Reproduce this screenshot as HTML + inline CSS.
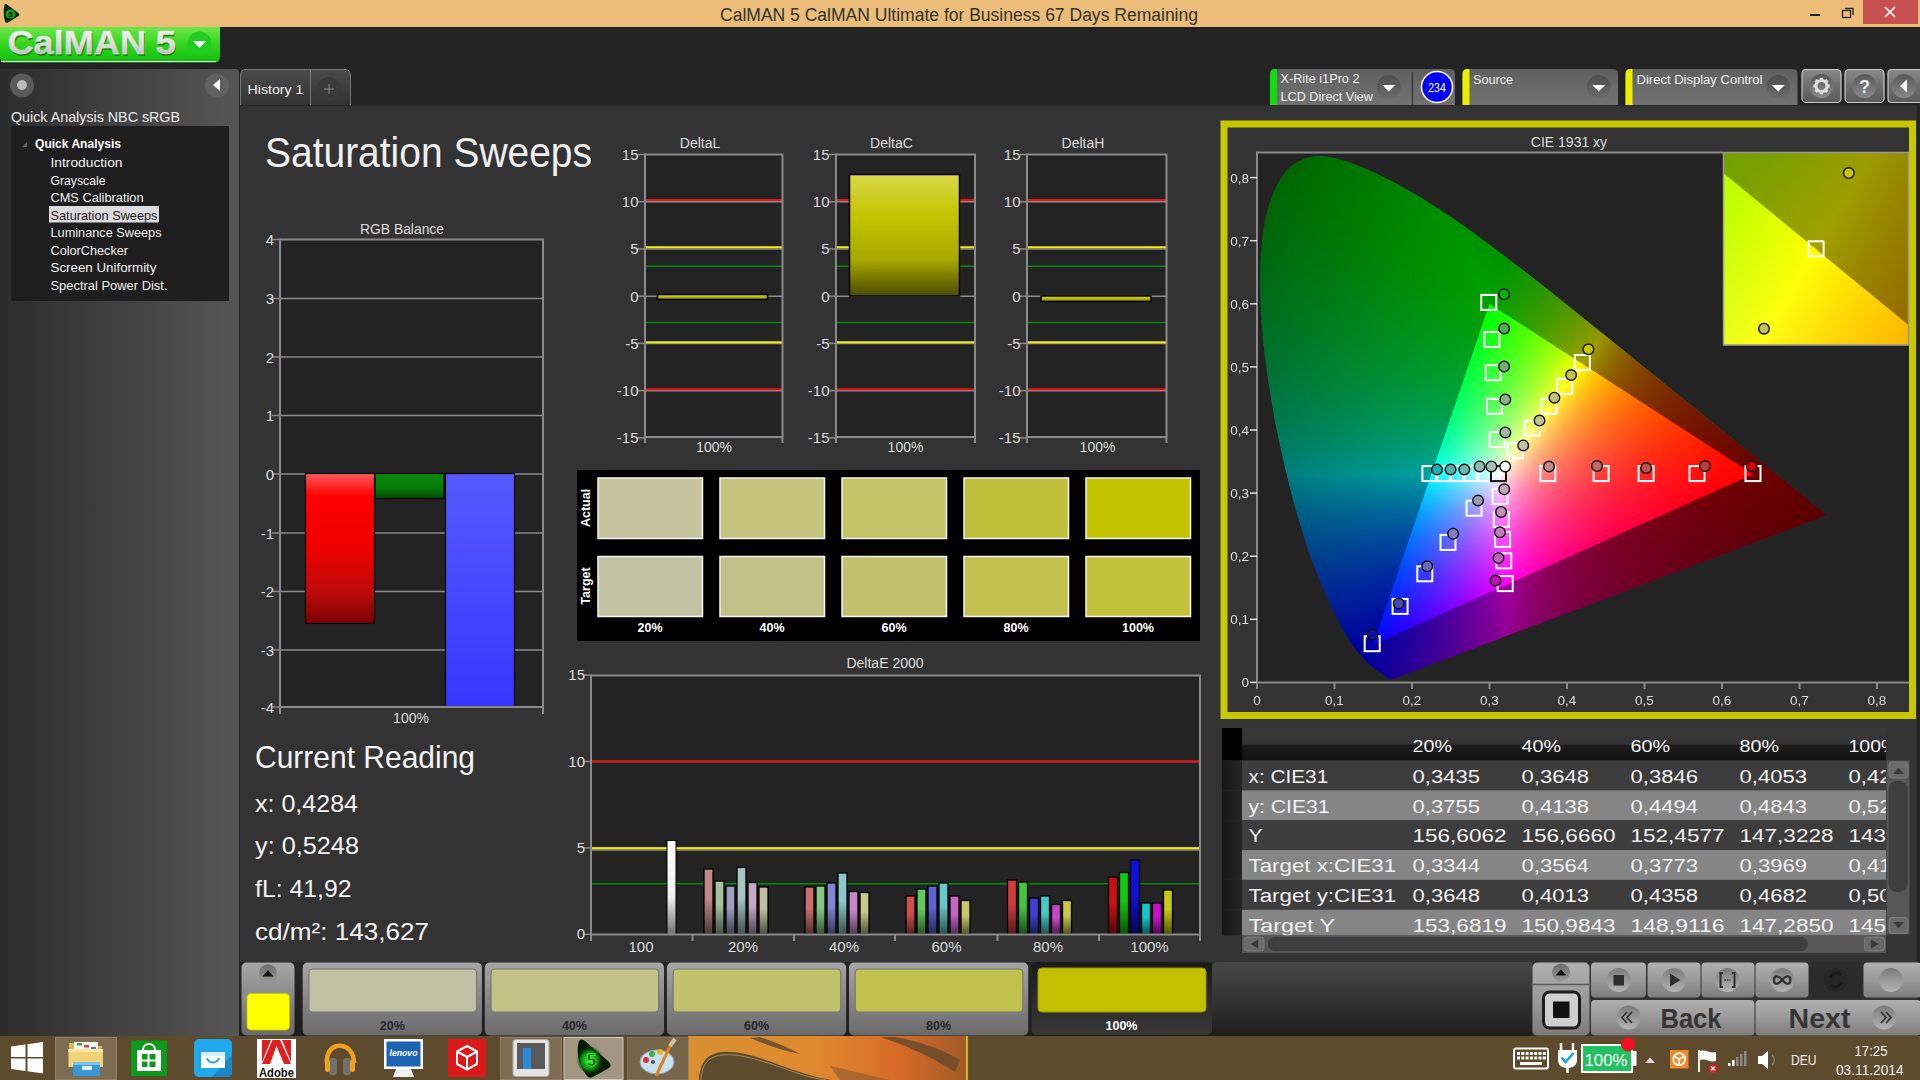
<!DOCTYPE html>
<html><head><meta charset="utf-8"><title>CalMAN 5</title>
<style>html,body{margin:0;padding:0;width:1920px;height:1080px;overflow:hidden;background:#232323}</style>
</head><body><svg width="1920" height="1080" viewBox="0 0 1920 1080" style="position:absolute;left:0;top:0" font-family='"Liberation Sans", sans-serif'><defs><linearGradient id="g1" x1="0" y1="0" x2="0" y2="1"><stop offset="0" stop-color="#6EE84A"/><stop offset="0.5" stop-color="#33D41C"/><stop offset="1" stop-color="#10C010"/></linearGradient><linearGradient id="g2" x1="0" y1="0" x2="0" y2="1"><stop offset="0" stop-color="#ffffff"/><stop offset="0.6" stop-color="#d8d8d8"/><stop offset="1" stop-color="#a8a8a8"/></linearGradient><linearGradient id="g3" x1="0" y1="0" x2="1" y2="0"><stop offset="0" stop-color="#2c2c2c"/><stop offset="1" stop-color="#565656"/></linearGradient><linearGradient id="g4" x1="0" y1="0" x2="0" y2="1"><stop offset="0" stop-color="#4a4a4a"/><stop offset="1" stop-color="#333"/></linearGradient><linearGradient id="g5" x1="0" y1="0" x2="0" y2="1"><stop offset="0" stop-color="#ff5a5a"/><stop offset="0.15" stop-color="#ff0000"/><stop offset="0.5" stop-color="#ee0000"/><stop offset="0.8" stop-color="#bb0a0a"/><stop offset="1" stop-color="#7a0000"/></linearGradient><linearGradient id="g6" x1="0" y1="0" x2="0" y2="1"><stop offset="0" stop-color="#0a8a0a"/><stop offset="0.6" stop-color="#067a06"/><stop offset="1" stop-color="#044a04"/></linearGradient><linearGradient id="g7" x1="0" y1="0" x2="0" y2="1"><stop offset="0" stop-color="#5858ff"/><stop offset="1" stop-color="#3636ff"/></linearGradient><linearGradient id="g8" x1="0" y1="0" x2="0" y2="1"><stop offset="0" stop-color="#d8d848"/><stop offset="0.35" stop-color="#c4c400"/><stop offset="0.7" stop-color="#a8a800"/><stop offset="1" stop-color="#4a4a00"/></linearGradient><linearGradient id="g9" x1="0" y1="0" x2="0" y2="1"><stop offset="0" stop-color="#d8d848"/><stop offset="0.35" stop-color="#c4c400"/><stop offset="0.7" stop-color="#a8a800"/><stop offset="1" stop-color="#4a4a00"/></linearGradient><linearGradient id="g10" x1="0" y1="0" x2="0" y2="1"><stop offset="0" stop-color="#d8d848"/><stop offset="0.35" stop-color="#c4c400"/><stop offset="0.7" stop-color="#a8a800"/><stop offset="1" stop-color="#4a4a00"/></linearGradient><linearGradient id="g11" x1="0" y1="0" x2="0" y2="1"><stop offset="0" stop-color="#ffffff"/><stop offset="0.6" stop-color="#f0f0f0"/><stop offset="1" stop-color="#707070"/></linearGradient><linearGradient id="g12" x1="0" y1="0" x2="0" y2="1"><stop offset="0" stop-color="#c08888"/><stop offset="0.45" stop-color="#c08888"/><stop offset="1" stop-color="#4c3636"/></linearGradient><linearGradient id="g13" x1="0" y1="0" x2="0" y2="1"><stop offset="0" stop-color="#a6c0a0"/><stop offset="0.45" stop-color="#a6c0a0"/><stop offset="1" stop-color="#424c40"/></linearGradient><linearGradient id="g14" x1="0" y1="0" x2="0" y2="1"><stop offset="0" stop-color="#9c9cc0"/><stop offset="0.45" stop-color="#9c9cc0"/><stop offset="1" stop-color="#3e3e4c"/></linearGradient><linearGradient id="g15" x1="0" y1="0" x2="0" y2="1"><stop offset="0" stop-color="#a8c4c4"/><stop offset="0.45" stop-color="#a8c4c4"/><stop offset="1" stop-color="#434e4e"/></linearGradient><linearGradient id="g16" x1="0" y1="0" x2="0" y2="1"><stop offset="0" stop-color="#c4a8c4"/><stop offset="0.45" stop-color="#c4a8c4"/><stop offset="1" stop-color="#4e434e"/></linearGradient><linearGradient id="g17" x1="0" y1="0" x2="0" y2="1"><stop offset="0" stop-color="#c0c0a0"/><stop offset="0.45" stop-color="#c0c0a0"/><stop offset="1" stop-color="#4c4c40"/></linearGradient><linearGradient id="g18" x1="0" y1="0" x2="0" y2="1"><stop offset="0" stop-color="#c87070"/><stop offset="0.45" stop-color="#c87070"/><stop offset="1" stop-color="#502c2c"/></linearGradient><linearGradient id="g19" x1="0" y1="0" x2="0" y2="1"><stop offset="0" stop-color="#84c884"/><stop offset="0.45" stop-color="#84c884"/><stop offset="1" stop-color="#345034"/></linearGradient><linearGradient id="g20" x1="0" y1="0" x2="0" y2="1"><stop offset="0" stop-color="#8484d4"/><stop offset="0.45" stop-color="#8484d4"/><stop offset="1" stop-color="#343454"/></linearGradient><linearGradient id="g21" x1="0" y1="0" x2="0" y2="1"><stop offset="0" stop-color="#8cc8c8"/><stop offset="0.45" stop-color="#8cc8c8"/><stop offset="1" stop-color="#385050"/></linearGradient><linearGradient id="g22" x1="0" y1="0" x2="0" y2="1"><stop offset="0" stop-color="#c884c8"/><stop offset="0.45" stop-color="#c884c8"/><stop offset="1" stop-color="#503450"/></linearGradient><linearGradient id="g23" x1="0" y1="0" x2="0" y2="1"><stop offset="0" stop-color="#c8c888"/><stop offset="0.45" stop-color="#c8c888"/><stop offset="1" stop-color="#505036"/></linearGradient><linearGradient id="g24" x1="0" y1="0" x2="0" y2="1"><stop offset="0" stop-color="#cc5050"/><stop offset="0.45" stop-color="#cc5050"/><stop offset="1" stop-color="#512020"/></linearGradient><linearGradient id="g25" x1="0" y1="0" x2="0" y2="1"><stop offset="0" stop-color="#60c860"/><stop offset="0.45" stop-color="#60c860"/><stop offset="1" stop-color="#265026"/></linearGradient><linearGradient id="g26" x1="0" y1="0" x2="0" y2="1"><stop offset="0" stop-color="#6060d0"/><stop offset="0.45" stop-color="#6060d0"/><stop offset="1" stop-color="#262653"/></linearGradient><linearGradient id="g27" x1="0" y1="0" x2="0" y2="1"><stop offset="0" stop-color="#66c8c8"/><stop offset="0.45" stop-color="#66c8c8"/><stop offset="1" stop-color="#285050"/></linearGradient><linearGradient id="g28" x1="0" y1="0" x2="0" y2="1"><stop offset="0" stop-color="#c866c8"/><stop offset="0.45" stop-color="#c866c8"/><stop offset="1" stop-color="#502850"/></linearGradient><linearGradient id="g29" x1="0" y1="0" x2="0" y2="1"><stop offset="0" stop-color="#c8c866"/><stop offset="0.45" stop-color="#c8c866"/><stop offset="1" stop-color="#505028"/></linearGradient><linearGradient id="g30" x1="0" y1="0" x2="0" y2="1"><stop offset="0" stop-color="#d03c3c"/><stop offset="0.45" stop-color="#d03c3c"/><stop offset="1" stop-color="#531818"/></linearGradient><linearGradient id="g31" x1="0" y1="0" x2="0" y2="1"><stop offset="0" stop-color="#40c840"/><stop offset="0.45" stop-color="#40c840"/><stop offset="1" stop-color="#195019"/></linearGradient><linearGradient id="g32" x1="0" y1="0" x2="0" y2="1"><stop offset="0" stop-color="#4040d8"/><stop offset="0.45" stop-color="#4040d8"/><stop offset="1" stop-color="#191956"/></linearGradient><linearGradient id="g33" x1="0" y1="0" x2="0" y2="1"><stop offset="0" stop-color="#44c8c8"/><stop offset="0.45" stop-color="#44c8c8"/><stop offset="1" stop-color="#1b5050"/></linearGradient><linearGradient id="g34" x1="0" y1="0" x2="0" y2="1"><stop offset="0" stop-color="#c844c8"/><stop offset="0.45" stop-color="#c844c8"/><stop offset="1" stop-color="#501b50"/></linearGradient><linearGradient id="g35" x1="0" y1="0" x2="0" y2="1"><stop offset="0" stop-color="#c8c844"/><stop offset="0.45" stop-color="#c8c844"/><stop offset="1" stop-color="#50501b"/></linearGradient><linearGradient id="g36" x1="0" y1="0" x2="0" y2="1"><stop offset="0" stop-color="#cc1010"/><stop offset="0.45" stop-color="#cc1010"/><stop offset="1" stop-color="#510606"/></linearGradient><linearGradient id="g37" x1="0" y1="0" x2="0" y2="1"><stop offset="0" stop-color="#10cc10"/><stop offset="0.45" stop-color="#10cc10"/><stop offset="1" stop-color="#065106"/></linearGradient><linearGradient id="g38" x1="0" y1="0" x2="0" y2="1"><stop offset="0" stop-color="#1010dd"/><stop offset="0.45" stop-color="#1010dd"/><stop offset="1" stop-color="#060658"/></linearGradient><linearGradient id="g39" x1="0" y1="0" x2="0" y2="1"><stop offset="0" stop-color="#10c8c8"/><stop offset="0.45" stop-color="#10c8c8"/><stop offset="1" stop-color="#065050"/></linearGradient><linearGradient id="g40" x1="0" y1="0" x2="0" y2="1"><stop offset="0" stop-color="#c810c8"/><stop offset="0.45" stop-color="#c810c8"/><stop offset="1" stop-color="#500650"/></linearGradient><linearGradient id="g41" x1="0" y1="0" x2="0" y2="1"><stop offset="0" stop-color="#c8c810"/><stop offset="0.45" stop-color="#c8c810"/><stop offset="1" stop-color="#505006"/></linearGradient><linearGradient id="g42" x1="0" y1="0" x2="0" y2="1"><stop offset="0" stop-color="#5e5e5e"/><stop offset="0.5" stop-color="#6a6a6a"/><stop offset="1" stop-color="#727272"/></linearGradient><linearGradient id="g43" x1="0" y1="0" x2="0" y2="1"><stop offset="0" stop-color="#4e4e4e"/><stop offset="1" stop-color="#6c6c6c"/></linearGradient><linearGradient id="g44" x1="0" y1="0" x2="0" y2="1"><stop offset="0" stop-color="#5e5e5e"/><stop offset="0.5" stop-color="#6a6a6a"/><stop offset="1" stop-color="#727272"/></linearGradient><linearGradient id="g45" x1="0" y1="0" x2="0" y2="1"><stop offset="0" stop-color="#4e4e4e"/><stop offset="1" stop-color="#6c6c6c"/></linearGradient><linearGradient id="g46" x1="0" y1="0" x2="0" y2="1"><stop offset="0" stop-color="#5e5e5e"/><stop offset="0.5" stop-color="#6a6a6a"/><stop offset="1" stop-color="#727272"/></linearGradient><linearGradient id="g47" x1="0" y1="0" x2="0" y2="1"><stop offset="0" stop-color="#4e4e4e"/><stop offset="1" stop-color="#6c6c6c"/></linearGradient><linearGradient id="g48" x1="0" y1="0" x2="0" y2="1"><stop offset="0" stop-color="#8a8a8a"/><stop offset="0.5" stop-color="#6e6e6e"/><stop offset="1" stop-color="#5a5a5a"/></linearGradient><linearGradient id="g49" x1="0" y1="0" x2="0" y2="1"><stop offset="0" stop-color="#585858"/><stop offset="1" stop-color="#8a8a8a"/></linearGradient><linearGradient id="g50" x1="0" y1="0" x2="0" y2="1"><stop offset="0" stop-color="#8a8a8a"/><stop offset="0.5" stop-color="#6e6e6e"/><stop offset="1" stop-color="#5a5a5a"/></linearGradient><linearGradient id="g51" x1="0" y1="0" x2="0" y2="1"><stop offset="0" stop-color="#585858"/><stop offset="1" stop-color="#8a8a8a"/></linearGradient><linearGradient id="g52" x1="0" y1="0" x2="0" y2="1"><stop offset="0" stop-color="#8a8a8a"/><stop offset="0.5" stop-color="#6e6e6e"/><stop offset="1" stop-color="#5a5a5a"/></linearGradient><linearGradient id="g53" x1="0" y1="0" x2="0" y2="1"><stop offset="0" stop-color="#585858"/><stop offset="1" stop-color="#8a8a8a"/></linearGradient><linearGradient id="g54" x1="0" y1="0" x2="0" y2="1"><stop offset="0" stop-color="#383838"/><stop offset="0.5" stop-color="#333"/><stop offset="0.52" stop-color="#1c1c1c"/><stop offset="1" stop-color="#111"/></linearGradient><linearGradient id="g55" x1="0" y1="0" x2="1" y2="0"><stop offset="0" stop-color="#161616"/><stop offset="1" stop-color="#262626"/></linearGradient><linearGradient id="g56" x1="0" y1="0" x2="0" y2="1"><stop offset="0" stop-color="#262626"/><stop offset="1" stop-color="#1e1e1e"/></linearGradient><linearGradient id="g57" x1="0" y1="0" x2="0" y2="1"><stop offset="0" stop-color="#474747"/><stop offset="0.5" stop-color="#333"/><stop offset="1" stop-color="#1e1e1e"/></linearGradient><linearGradient id="g58" x1="0" y1="0" x2="0" y2="1"><stop offset="0" stop-color="#a6a6a6"/><stop offset="0.45" stop-color="#8a8a8a"/><stop offset="1" stop-color="#6a6a6a"/></linearGradient><linearGradient id="g59" x1="0" y1="0" x2="0" y2="1"><stop offset="0" stop-color="#6a6a6a"/><stop offset="1" stop-color="#9a9a9a"/></linearGradient><linearGradient id="g60" x1="0" y1="0" x2="0" y2="1"><stop offset="0" stop-color="#191919"/><stop offset="0.6" stop-color="#2e2e2e"/><stop offset="1" stop-color="#363636"/></linearGradient><linearGradient id="g61" x1="0" y1="0" x2="0" y2="1"><stop offset="0" stop-color="#b0b0b0"/><stop offset="0.5" stop-color="#9a9a9a"/><stop offset="1" stop-color="#7c7c7c"/></linearGradient><linearGradient id="g62" x1="0" y1="0" x2="0" y2="1"><stop offset="0" stop-color="#7a7a7a"/><stop offset="1" stop-color="#b4b4b4"/></linearGradient><linearGradient id="g63" x1="0" y1="0" x2="1" y2="0"><stop offset="0" stop-color="#d89030"/><stop offset="0.45" stop-color="#e08a30"/><stop offset="0.75" stop-color="#d86a28"/><stop offset="1" stop-color="#a05a28"/></linearGradient><radialGradient id="cg5" cx="0.45" cy="0.55" r="0.5"><stop offset="0" stop-color="#3aff3a"/><stop offset="0.6" stop-color="#0a8a0a"/><stop offset="1" stop-color="#031a03" stop-opacity="0"/></radialGradient><linearGradient id="g64" x1="0" y1="0" x2="0" y2="1"><stop offset="0" stop-color="#006400"/><stop offset="0.45" stop-color="#008a30"/><stop offset="0.6" stop-color="#008a80"/><stop offset="0.75" stop-color="#003a9a"/><stop offset="1" stop-color="#0000a0"/></linearGradient><linearGradient id="g65" x1="0" y1="0" x2="0" y2="1"><stop offset="0" stop-color="#5a0000"/><stop offset="1" stop-color="#5a0000"/></linearGradient><linearGradient id="g66" x1="0" y1="0" x2="1" y2="0.6"><stop offset="0" stop-color="#1a9a10"/><stop offset="0.45" stop-color="#8a9000"/><stop offset="0.75" stop-color="#7a3000"/><stop offset="1" stop-color="#5a0000"/></linearGradient><linearGradient id="g67" x1="0" y1="0" x2="1" y2="0"><stop offset="0" stop-color="#3000a0"/><stop offset="0.4" stop-color="#900080"/><stop offset="0.7" stop-color="#7a0030"/><stop offset="1" stop-color="#5a0000"/></linearGradient><linearGradient id="fbR" gradientUnits="userSpaceOnUse" x1="1753.0" y1="474.2" x2="1464.9" y2="375.9"><stop offset="0" stop-color="#ff0000"/><stop offset="0.62" stop-color="#ff0000"/><stop offset="1" stop-color="#000"/></linearGradient><linearGradient id="fbG" gradientUnits="userSpaceOnUse" x1="1489.5" y1="303.8" x2="1597.3" y2="544.0"><stop offset="0" stop-color="#00ff00"/><stop offset="0.62" stop-color="#00ff00"/><stop offset="1" stop-color="#000"/></linearGradient><linearGradient id="fbB" gradientUnits="userSpaceOnUse" x1="1373.2" y1="644.5" x2="1562.9" y2="351.2"><stop offset="0" stop-color="#0000ff"/><stop offset="0.62" stop-color="#0000ff"/><stop offset="1" stop-color="#000"/></linearGradient><linearGradient id="g68" x1="0" y1="0" x2="1" y2="1"><stop offset="0" stop-color="#d0ff00"/><stop offset="0.5" stop-color="#ffff00"/><stop offset="1" stop-color="#ffb000"/></linearGradient></defs><rect x="0" y="0" width="1920" height="1080" fill="#232323" /><rect x="0" y="0" width="1920" height="27" fill="#EBBD78" /><text x="959" y="21" font-size="18" fill="#333" text-anchor="middle" font-weight="normal" textLength="478" lengthAdjust="spacingAndGlyphs" >CalMAN 5 CalMAN Ultimate for Business 67 Days Remaining</text><rect x="1863" y="0" width="55" height="24" fill="#C75050" /><path d="M1885 7 L1895 17 M1895 7 L1885 17" stroke="#fff" stroke-width="1.6"/><rect x="1810" y="14" width="10" height="2" fill="#222" /><rect x="1842.5" y="10.5" width="8" height="7" fill="none" stroke="#222" stroke-width="1.3"/><path d="M1845 8.5 H1853 V15" fill="none" stroke="#222" stroke-width="1.3"/><path d="M4.5 5 Q5 3 7 4.5 L19 13.5 Q20 15 18.5 16 L8 22.5 Q6 23.5 5 21.5 Q2.5 13 4.5 5Z" fill="#062a06"/><ellipse cx="10.5" cy="14" rx="5" ry="4.5" fill="#1fb01f" opacity="0.85"/><text x="10.5" y="17" font-size="8" font-weight="bold" fill="#000" text-anchor="middle">5</text><path d="M0 27 H220 V57 Q220 62.5 214.5 62.5 H5.5 Q0 62.5 0 57 Z" fill="url(#g1)"/><path d="M1 61.5 H216" stroke="#e8ffe8" stroke-width="1"/><text x="8.5" y="55.5" font-size="33" fill="#1a6a10" text-anchor="start" font-weight="bold" textLength="138.5" lengthAdjust="spacingAndGlyphs" opacity="0.7">CalMAN</text><text x="156.5" y="55.5" font-size="33" fill="#1a6a10" text-anchor="start" font-weight="bold" textLength="20.5" lengthAdjust="spacingAndGlyphs" opacity="0.7">5</text><text x="7.5" y="54" font-size="33" fill="url(#g2)" text-anchor="start" font-weight="bold" textLength="138.5" lengthAdjust="spacingAndGlyphs" stroke="#e8e8e8" stroke-width="0.3">CalMAN</text><text x="155.5" y="54" font-size="33" fill="url(#g2)" text-anchor="start" font-weight="bold" textLength="20.5" lengthAdjust="spacingAndGlyphs" stroke="#e8e8e8" stroke-width="0.3">5</text><circle cx="199.5" cy="43.5" r="12" fill="#22cc22"/><path d="M193 41 H206 L199.5 48 Z" fill="#fff"/><path d="M0 69 H235 Q239 69 239 73 V1036 H0 Z" fill="url(#g3)"/><circle cx="22" cy="85.5" r="12" fill="#5a5a5a"/><circle cx="22" cy="85" r="5" fill="#bbb"/><circle cx="217" cy="85.5" r="12" fill="#606060"/><path d="M213 85 L220 79 V91 Z" fill="#fff"/><text x="11" y="121.5" font-size="15.5" fill="#eee" text-anchor="start" font-weight="normal" textLength="169" lengthAdjust="spacingAndGlyphs" >Quick Analysis NBC sRGB</text><rect x="11" y="126" width="218" height="175" fill="#1e1e1e" /><path d="M22 147 L27 142 V147 Z" fill="#666"/><text x="35" y="148" font-size="12.5" fill="#fff" text-anchor="start" font-weight="bold" textLength="86" lengthAdjust="spacingAndGlyphs" >Quick Analysis</text><rect x="49" y="206" width="110" height="16.5" fill="#dcdcdc" /><text x="50.5" y="167" font-size="12.5" fill="#f2f2f2" text-anchor="start" font-weight="normal" textLength="72" lengthAdjust="spacingAndGlyphs" >Introduction</text><text x="50.5" y="184.5" font-size="12.5" fill="#f2f2f2" text-anchor="start" font-weight="normal" textLength="55" lengthAdjust="spacingAndGlyphs" >Grayscale</text><text x="50.5" y="202" font-size="12.5" fill="#f2f2f2" text-anchor="start" font-weight="normal" textLength="93" lengthAdjust="spacingAndGlyphs" >CMS Calibration</text><text x="50.5" y="219.5" font-size="12.5" fill="#222" text-anchor="start" font-weight="normal" textLength="107" lengthAdjust="spacingAndGlyphs" >Saturation Sweeps</text><text x="50.5" y="237" font-size="12.5" fill="#f2f2f2" text-anchor="start" font-weight="normal" textLength="111" lengthAdjust="spacingAndGlyphs" >Luminance Sweeps</text><text x="50.5" y="254.5" font-size="12.5" fill="#f2f2f2" text-anchor="start" font-weight="normal" textLength="77.5" lengthAdjust="spacingAndGlyphs" >ColorChecker</text><text x="50.5" y="272" font-size="12.5" fill="#f2f2f2" text-anchor="start" font-weight="normal" textLength="106" lengthAdjust="spacingAndGlyphs" >Screen Uniformity</text><text x="50.5" y="289.5" font-size="12.5" fill="#f2f2f2" text-anchor="start" font-weight="normal" textLength="117" lengthAdjust="spacingAndGlyphs" >Spectral Power Dist.</text><path d="M240.5 105 V75 Q240.5 69.5 246 69.5 H345 Q350.5 69.5 350.5 75 V105" fill="url(#g4)" stroke="#777" stroke-width="1"/><line x1="310.5" y1="70" x2="310.5" y2="105" stroke="#777" stroke-width="1" /><text x="247.5" y="94" font-size="13" fill="#eee" text-anchor="start" font-weight="normal" textLength="56" lengthAdjust="spacingAndGlyphs" >History 1</text><circle cx="329" cy="89" r="12" fill="#3a3a3a"/><path d="M329 84 V94 M324 89 H334" stroke="#888" stroke-width="1"/><rect x="240" y="105.5" width="1677" height="931" fill="#333333" /><text x="265" y="167" font-size="42" fill="#f0f0f0" text-anchor="start" font-weight="normal" textLength="327" lengthAdjust="spacingAndGlyphs" >Saturation Sweeps</text><text x="402" y="233.5" font-size="14" fill="#ddd" text-anchor="middle" font-weight="normal" textLength="84" lengthAdjust="spacingAndGlyphs" >RGB Balance</text><rect x="280" y="239.5" width="263" height="467" fill="#232323" /><line x1="272" y1="239.5" x2="280" y2="239.5" stroke="#8a8a8a" stroke-width="1.5" /><text x="274" y="245.0" font-size="15" fill="#ddd" text-anchor="end" font-weight="normal" >4</text><line x1="272" y1="298.5" x2="280" y2="298.5" stroke="#8a8a8a" stroke-width="1.5" /><line x1="280" y1="298.5" x2="543" y2="298.5" stroke="#8a8a8a" stroke-width="1.5" /><text x="274" y="304.0" font-size="15" fill="#ddd" text-anchor="end" font-weight="normal" >3</text><line x1="272" y1="357" x2="280" y2="357" stroke="#8a8a8a" stroke-width="1.5" /><line x1="280" y1="357" x2="543" y2="357" stroke="#8a8a8a" stroke-width="1.5" /><text x="274" y="362.5" font-size="15" fill="#ddd" text-anchor="end" font-weight="normal" >2</text><line x1="272" y1="415.5" x2="280" y2="415.5" stroke="#8a8a8a" stroke-width="1.5" /><line x1="280" y1="415.5" x2="543" y2="415.5" stroke="#8a8a8a" stroke-width="1.5" /><text x="274" y="421.0" font-size="15" fill="#ddd" text-anchor="end" font-weight="normal" >1</text><line x1="272" y1="474" x2="280" y2="474" stroke="#8a8a8a" stroke-width="1.5" /><line x1="280" y1="474" x2="543" y2="474" stroke="#8a8a8a" stroke-width="1.5" /><text x="274" y="479.5" font-size="15" fill="#ddd" text-anchor="end" font-weight="normal" >0</text><line x1="272" y1="533" x2="280" y2="533" stroke="#8a8a8a" stroke-width="1.5" /><line x1="280" y1="533" x2="543" y2="533" stroke="#8a8a8a" stroke-width="1.5" /><text x="274" y="538.5" font-size="15" fill="#ddd" text-anchor="end" font-weight="normal" >-1</text><line x1="272" y1="591.5" x2="280" y2="591.5" stroke="#8a8a8a" stroke-width="1.5" /><line x1="280" y1="591.5" x2="543" y2="591.5" stroke="#8a8a8a" stroke-width="1.5" /><text x="274" y="597.0" font-size="15" fill="#ddd" text-anchor="end" font-weight="normal" >-2</text><line x1="272" y1="650" x2="280" y2="650" stroke="#8a8a8a" stroke-width="1.5" /><line x1="280" y1="650" x2="543" y2="650" stroke="#8a8a8a" stroke-width="1.5" /><text x="274" y="655.5" font-size="15" fill="#ddd" text-anchor="end" font-weight="normal" >-3</text><line x1="272" y1="707" x2="280" y2="707" stroke="#8a8a8a" stroke-width="1.5" /><text x="274" y="712.5" font-size="15" fill="#ddd" text-anchor="end" font-weight="normal" >-4</text><rect x="305.5" y="473.5" width="69" height="150" fill="url(#g5)" stroke="#000" stroke-width="1.2"/><rect x="375" y="473.5" width="69" height="25" fill="url(#g6)" stroke="#000" stroke-width="1.2"/><rect x="445.5" y="473.5" width="69" height="233" fill="url(#g7)" stroke="#000" stroke-width="1.2"/><path d="M280 239.5 H543 V707" fill="none" stroke="#8a8a8a" stroke-width="2"/><line x1="280" y1="238.5" x2="280" y2="714" stroke="#8a8a8a" stroke-width="2" /><line x1="279" y1="707" x2="543" y2="707" stroke="#8a8a8a" stroke-width="2" /><line x1="543" y1="707" x2="543" y2="714" stroke="#8a8a8a" stroke-width="2" /><text x="411" y="723" font-size="14" fill="#ddd" text-anchor="middle" font-weight="normal" >100%</text><text x="700" y="148" font-size="14" fill="#ddd" text-anchor="middle" font-weight="normal" >DeltaL</text><rect x="645" y="154.5" width="137.5" height="282" fill="#232323" /><line x1="638" y1="154.495" x2="645" y2="154.495" stroke="#8a8a8a" stroke-width="1.5" /><text x="638.5" y="159.995" font-size="15" fill="#ddd" text-anchor="end" font-weight="normal" >15</text><line x1="638" y1="201.73" x2="645" y2="201.73" stroke="#8a8a8a" stroke-width="1.5" /><line x1="645" y1="201.73" x2="782.5" y2="201.73" stroke="#8a8a8a" stroke-width="1.5" /><text x="638.5" y="207.23" font-size="15" fill="#ddd" text-anchor="end" font-weight="normal" >10</text><line x1="638" y1="248.96499999999997" x2="645" y2="248.96499999999997" stroke="#8a8a8a" stroke-width="1.5" /><line x1="645" y1="248.96499999999997" x2="782.5" y2="248.96499999999997" stroke="#8a8a8a" stroke-width="1.5" /><text x="638.5" y="254.46499999999997" font-size="15" fill="#ddd" text-anchor="end" font-weight="normal" >5</text><line x1="638" y1="296.2" x2="645" y2="296.2" stroke="#8a8a8a" stroke-width="1.5" /><line x1="645" y1="296.2" x2="782.5" y2="296.2" stroke="#8a8a8a" stroke-width="1.5" /><text x="638.5" y="301.7" font-size="15" fill="#ddd" text-anchor="end" font-weight="normal" >0</text><line x1="638" y1="343.435" x2="645" y2="343.435" stroke="#8a8a8a" stroke-width="1.5" /><line x1="645" y1="343.435" x2="782.5" y2="343.435" stroke="#8a8a8a" stroke-width="1.5" /><text x="638.5" y="348.935" font-size="15" fill="#ddd" text-anchor="end" font-weight="normal" >-5</text><line x1="638" y1="390.66999999999996" x2="645" y2="390.66999999999996" stroke="#8a8a8a" stroke-width="1.5" /><line x1="645" y1="390.66999999999996" x2="782.5" y2="390.66999999999996" stroke="#8a8a8a" stroke-width="1.5" /><text x="638.5" y="396.16999999999996" font-size="15" fill="#ddd" text-anchor="end" font-weight="normal" >-10</text><line x1="638" y1="437.905" x2="645" y2="437.905" stroke="#8a8a8a" stroke-width="1.5" /><text x="638.5" y="443.405" font-size="15" fill="#ddd" text-anchor="end" font-weight="normal" >-15</text><line x1="645" y1="199.92999999999998" x2="782.5" y2="199.92999999999998" stroke="#ee1111" stroke-width="2" /><line x1="645" y1="389.36999999999995" x2="782.5" y2="389.36999999999995" stroke="#ee1111" stroke-width="2" /><line x1="645" y1="247.16499999999996" x2="782.5" y2="247.16499999999996" stroke="#f0f000" stroke-width="2" /><line x1="645" y1="342.135" x2="782.5" y2="342.135" stroke="#f0f000" stroke-width="2" /><line x1="645" y1="266.3" x2="782.5" y2="266.3" stroke="#0a8a0a" stroke-width="1.5" /><line x1="645" y1="322.6" x2="782.5" y2="322.6" stroke="#0a8a0a" stroke-width="1.5" /><rect x="657.5" y="294.5" width="110.0" height="5.0" fill="url(#g8)" stroke="#000" stroke-width="1.5"/><path d="M645 154.5 H782.5 V437" fill="none" stroke="#8a8a8a" stroke-width="2"/><line x1="645" y1="153.5" x2="645" y2="443" stroke="#8a8a8a" stroke-width="2" /><line x1="645" y1="437" x2="782.5" y2="437" stroke="#8a8a8a" stroke-width="2" /><line x1="782.5" y1="437" x2="782.5" y2="443" stroke="#8a8a8a" stroke-width="2" /><text x="714" y="452" font-size="14" fill="#ddd" text-anchor="middle" font-weight="normal" >100%</text><text x="891.5" y="148" font-size="14" fill="#ddd" text-anchor="middle" font-weight="normal" >DeltaC</text><rect x="836" y="154.5" width="139" height="282" fill="#232323" /><line x1="829" y1="154.495" x2="836" y2="154.495" stroke="#8a8a8a" stroke-width="1.5" /><text x="829.5" y="159.995" font-size="15" fill="#ddd" text-anchor="end" font-weight="normal" >15</text><line x1="829" y1="201.73" x2="836" y2="201.73" stroke="#8a8a8a" stroke-width="1.5" /><line x1="836" y1="201.73" x2="975" y2="201.73" stroke="#8a8a8a" stroke-width="1.5" /><text x="829.5" y="207.23" font-size="15" fill="#ddd" text-anchor="end" font-weight="normal" >10</text><line x1="829" y1="248.96499999999997" x2="836" y2="248.96499999999997" stroke="#8a8a8a" stroke-width="1.5" /><line x1="836" y1="248.96499999999997" x2="975" y2="248.96499999999997" stroke="#8a8a8a" stroke-width="1.5" /><text x="829.5" y="254.46499999999997" font-size="15" fill="#ddd" text-anchor="end" font-weight="normal" >5</text><line x1="829" y1="296.2" x2="836" y2="296.2" stroke="#8a8a8a" stroke-width="1.5" /><line x1="836" y1="296.2" x2="975" y2="296.2" stroke="#8a8a8a" stroke-width="1.5" /><text x="829.5" y="301.7" font-size="15" fill="#ddd" text-anchor="end" font-weight="normal" >0</text><line x1="829" y1="343.435" x2="836" y2="343.435" stroke="#8a8a8a" stroke-width="1.5" /><line x1="836" y1="343.435" x2="975" y2="343.435" stroke="#8a8a8a" stroke-width="1.5" /><text x="829.5" y="348.935" font-size="15" fill="#ddd" text-anchor="end" font-weight="normal" >-5</text><line x1="829" y1="390.66999999999996" x2="836" y2="390.66999999999996" stroke="#8a8a8a" stroke-width="1.5" /><line x1="836" y1="390.66999999999996" x2="975" y2="390.66999999999996" stroke="#8a8a8a" stroke-width="1.5" /><text x="829.5" y="396.16999999999996" font-size="15" fill="#ddd" text-anchor="end" font-weight="normal" >-10</text><line x1="829" y1="437.905" x2="836" y2="437.905" stroke="#8a8a8a" stroke-width="1.5" /><text x="829.5" y="443.405" font-size="15" fill="#ddd" text-anchor="end" font-weight="normal" >-15</text><line x1="836" y1="199.92999999999998" x2="975" y2="199.92999999999998" stroke="#ee1111" stroke-width="2" /><line x1="836" y1="389.36999999999995" x2="975" y2="389.36999999999995" stroke="#ee1111" stroke-width="2" /><line x1="836" y1="247.16499999999996" x2="975" y2="247.16499999999996" stroke="#f0f000" stroke-width="2" /><line x1="836" y1="342.135" x2="975" y2="342.135" stroke="#f0f000" stroke-width="2" /><line x1="836" y1="266.3" x2="975" y2="266.3" stroke="#0a8a0a" stroke-width="1.5" /><line x1="836" y1="322.6" x2="975" y2="322.6" stroke="#0a8a0a" stroke-width="1.5" /><rect x="849.5" y="174.5" width="110.0" height="121.5" fill="url(#g9)" stroke="#000" stroke-width="1.5"/><path d="M836 154.5 H975 V437" fill="none" stroke="#8a8a8a" stroke-width="2"/><line x1="836" y1="153.5" x2="836" y2="443" stroke="#8a8a8a" stroke-width="2" /><line x1="836" y1="437" x2="975" y2="437" stroke="#8a8a8a" stroke-width="2" /><line x1="975" y1="437" x2="975" y2="443" stroke="#8a8a8a" stroke-width="2" /><text x="905.5" y="452" font-size="14" fill="#ddd" text-anchor="middle" font-weight="normal" >100%</text><text x="1083" y="148" font-size="14" fill="#ddd" text-anchor="middle" font-weight="normal" >DeltaH</text><rect x="1027" y="154.5" width="139.5" height="282" fill="#232323" /><line x1="1020" y1="154.495" x2="1027" y2="154.495" stroke="#8a8a8a" stroke-width="1.5" /><text x="1020.5" y="159.995" font-size="15" fill="#ddd" text-anchor="end" font-weight="normal" >15</text><line x1="1020" y1="201.73" x2="1027" y2="201.73" stroke="#8a8a8a" stroke-width="1.5" /><line x1="1027" y1="201.73" x2="1166.5" y2="201.73" stroke="#8a8a8a" stroke-width="1.5" /><text x="1020.5" y="207.23" font-size="15" fill="#ddd" text-anchor="end" font-weight="normal" >10</text><line x1="1020" y1="248.96499999999997" x2="1027" y2="248.96499999999997" stroke="#8a8a8a" stroke-width="1.5" /><line x1="1027" y1="248.96499999999997" x2="1166.5" y2="248.96499999999997" stroke="#8a8a8a" stroke-width="1.5" /><text x="1020.5" y="254.46499999999997" font-size="15" fill="#ddd" text-anchor="end" font-weight="normal" >5</text><line x1="1020" y1="296.2" x2="1027" y2="296.2" stroke="#8a8a8a" stroke-width="1.5" /><line x1="1027" y1="296.2" x2="1166.5" y2="296.2" stroke="#8a8a8a" stroke-width="1.5" /><text x="1020.5" y="301.7" font-size="15" fill="#ddd" text-anchor="end" font-weight="normal" >0</text><line x1="1020" y1="343.435" x2="1027" y2="343.435" stroke="#8a8a8a" stroke-width="1.5" /><line x1="1027" y1="343.435" x2="1166.5" y2="343.435" stroke="#8a8a8a" stroke-width="1.5" /><text x="1020.5" y="348.935" font-size="15" fill="#ddd" text-anchor="end" font-weight="normal" >-5</text><line x1="1020" y1="390.66999999999996" x2="1027" y2="390.66999999999996" stroke="#8a8a8a" stroke-width="1.5" /><line x1="1027" y1="390.66999999999996" x2="1166.5" y2="390.66999999999996" stroke="#8a8a8a" stroke-width="1.5" /><text x="1020.5" y="396.16999999999996" font-size="15" fill="#ddd" text-anchor="end" font-weight="normal" >-10</text><line x1="1020" y1="437.905" x2="1027" y2="437.905" stroke="#8a8a8a" stroke-width="1.5" /><text x="1020.5" y="443.405" font-size="15" fill="#ddd" text-anchor="end" font-weight="normal" >-15</text><line x1="1027" y1="199.92999999999998" x2="1166.5" y2="199.92999999999998" stroke="#ee1111" stroke-width="2" /><line x1="1027" y1="389.36999999999995" x2="1166.5" y2="389.36999999999995" stroke="#ee1111" stroke-width="2" /><line x1="1027" y1="247.16499999999996" x2="1166.5" y2="247.16499999999996" stroke="#f0f000" stroke-width="2" /><line x1="1027" y1="342.135" x2="1166.5" y2="342.135" stroke="#f0f000" stroke-width="2" /><line x1="1027" y1="266.3" x2="1166.5" y2="266.3" stroke="#0a8a0a" stroke-width="1.5" /><line x1="1027" y1="322.6" x2="1166.5" y2="322.6" stroke="#0a8a0a" stroke-width="1.5" /><rect x="1041" y="296" width="110" height="5.5" fill="url(#g10)" stroke="#000" stroke-width="1.5"/><path d="M1027 154.5 H1166.5 V437" fill="none" stroke="#8a8a8a" stroke-width="2"/><line x1="1027" y1="153.5" x2="1027" y2="443" stroke="#8a8a8a" stroke-width="2" /><line x1="1027" y1="437" x2="1166.5" y2="437" stroke="#8a8a8a" stroke-width="2" /><line x1="1166.5" y1="437" x2="1166.5" y2="443" stroke="#8a8a8a" stroke-width="2" /><text x="1097.5" y="452" font-size="14" fill="#ddd" text-anchor="middle" font-weight="normal" >100%</text><rect x="577" y="470" width="623" height="171" fill="#000" /><rect x="598" y="478" width="104.5" height="60.5" fill="#C6C39C" stroke="#f4f4f4" stroke-width="1.5"/><rect x="598" y="556.5" width="104.5" height="60" fill="#C1C2A3" stroke="#f4f4f4" stroke-width="1.5"/><text x="650" y="632" font-size="12.5" fill="#fff" text-anchor="middle" font-weight="bold" >20%</text><rect x="720" y="478" width="104.5" height="60.5" fill="#C4C47F" stroke="#f4f4f4" stroke-width="1.5"/><rect x="720" y="556.5" width="104.5" height="60" fill="#C1C086" stroke="#f4f4f4" stroke-width="1.5"/><text x="772" y="632" font-size="12.5" fill="#fff" text-anchor="middle" font-weight="bold" >40%</text><rect x="842" y="478" width="104.5" height="60.5" fill="#C3C466" stroke="#f4f4f4" stroke-width="1.5"/><rect x="842" y="556.5" width="104.5" height="60" fill="#C2C06D" stroke="#f4f4f4" stroke-width="1.5"/><text x="894" y="632" font-size="12.5" fill="#fff" text-anchor="middle" font-weight="bold" >60%</text><rect x="964" y="478" width="104.5" height="60.5" fill="#BFBE3A" stroke="#f4f4f4" stroke-width="1.5"/><rect x="964" y="556.5" width="104.5" height="60" fill="#C2C04F" stroke="#f4f4f4" stroke-width="1.5"/><text x="1016" y="632" font-size="12.5" fill="#fff" text-anchor="middle" font-weight="bold" >80%</text><rect x="1086" y="478" width="104.5" height="60.5" fill="#C3C300" stroke="#f4f4f4" stroke-width="1.5"/><rect x="1086" y="556.5" width="104.5" height="60" fill="#C4C23B" stroke="#f4f4f4" stroke-width="1.5"/><text x="1138" y="632" font-size="12.5" fill="#fff" text-anchor="middle" font-weight="bold" >100%</text><text transform="translate(590,508) rotate(-90)" font-size="12.5" font-weight="bold" fill="#fff" text-anchor="middle">Actual</text><text transform="translate(590,586) rotate(-90)" font-size="12.5" font-weight="bold" fill="#fff" text-anchor="middle">Target</text><text x="885" y="668" font-size="14" fill="#ddd" text-anchor="middle" font-weight="normal" >DeltaE 2000</text><rect x="591" y="675.5" width="609" height="259" fill="#232323" /><line x1="583" y1="675.0999999999999" x2="591" y2="675.0999999999999" stroke="#8a8a8a" stroke-width="1.5" /><text x="585" y="680.0999999999999" font-size="15" fill="#ddd" text-anchor="end" font-weight="normal" >15</text><line x1="583" y1="761.5" x2="591" y2="761.5" stroke="#8a8a8a" stroke-width="1.5" /><line x1="591" y1="761.5" x2="1200" y2="761.5" stroke="#8a8a8a" stroke-width="1.5" /><text x="585" y="766.5" font-size="15" fill="#ddd" text-anchor="end" font-weight="normal" >10</text><line x1="583" y1="847.9" x2="591" y2="847.9" stroke="#8a8a8a" stroke-width="1.5" /><line x1="591" y1="847.9" x2="1200" y2="847.9" stroke="#8a8a8a" stroke-width="1.5" /><text x="585" y="852.9" font-size="15" fill="#ddd" text-anchor="end" font-weight="normal" >5</text><line x1="583" y1="934.3" x2="591" y2="934.3" stroke="#8a8a8a" stroke-width="1.5" /><text x="585" y="939.3" font-size="15" fill="#ddd" text-anchor="end" font-weight="normal" >0</text><line x1="591" y1="761.5" x2="1200" y2="761.5" stroke="#ee1111" stroke-width="2" /><line x1="591" y1="850" x2="1200" y2="850" stroke="#8a8a8a" stroke-width="1.5" /><line x1="591" y1="848.3" x2="1200" y2="848.3" stroke="#f0f000" stroke-width="2" /><line x1="591" y1="883.8" x2="1200" y2="883.8" stroke="#0a8a0a" stroke-width="1.5" /><rect x="667" y="840.5" width="9" height="94" fill="url(#g11)" stroke="#000" stroke-width="1"/><rect x="704" y="869" width="9" height="65.29999999999995" fill="url(#g12)" stroke="#000" stroke-width="1.3"/><rect x="715" y="881" width="9" height="53.299999999999955" fill="url(#g13)" stroke="#000" stroke-width="1.3"/><rect x="726" y="886" width="9" height="48.299999999999955" fill="url(#g14)" stroke="#000" stroke-width="1.3"/><rect x="737" y="867.5" width="9" height="66.79999999999995" fill="url(#g15)" stroke="#000" stroke-width="1.3"/><rect x="748" y="882.5" width="9" height="51.799999999999955" fill="url(#g16)" stroke="#000" stroke-width="1.3"/><rect x="759" y="887" width="9" height="47.299999999999955" fill="url(#g17)" stroke="#000" stroke-width="1.3"/><rect x="805" y="887" width="9" height="47.299999999999955" fill="url(#g18)" stroke="#000" stroke-width="1.3"/><rect x="816" y="886" width="9" height="48.299999999999955" fill="url(#g19)" stroke="#000" stroke-width="1.3"/><rect x="827" y="883" width="9" height="51.299999999999955" fill="url(#g20)" stroke="#000" stroke-width="1.3"/><rect x="838" y="873" width="9" height="61.299999999999955" fill="url(#g21)" stroke="#000" stroke-width="1.3"/><rect x="849" y="891.5" width="9" height="42.799999999999955" fill="url(#g22)" stroke="#000" stroke-width="1.3"/><rect x="860" y="892.5" width="9" height="41.799999999999955" fill="url(#g23)" stroke="#000" stroke-width="1.3"/><rect x="906" y="896" width="9" height="38.299999999999955" fill="url(#g24)" stroke="#000" stroke-width="1.3"/><rect x="917" y="889" width="9" height="45.299999999999955" fill="url(#g25)" stroke="#000" stroke-width="1.3"/><rect x="928" y="886" width="9" height="48.299999999999955" fill="url(#g26)" stroke="#000" stroke-width="1.3"/><rect x="939" y="883" width="9" height="51.299999999999955" fill="url(#g27)" stroke="#000" stroke-width="1.3"/><rect x="950" y="896" width="9" height="38.299999999999955" fill="url(#g28)" stroke="#000" stroke-width="1.3"/><rect x="961" y="900.5" width="9" height="33.799999999999955" fill="url(#g29)" stroke="#000" stroke-width="1.3"/><rect x="1007.5" y="880" width="9" height="54.299999999999955" fill="url(#g30)" stroke="#000" stroke-width="1.3"/><rect x="1018.5" y="882" width="9" height="52.299999999999955" fill="url(#g31)" stroke="#000" stroke-width="1.3"/><rect x="1029.5" y="898" width="9" height="36.299999999999955" fill="url(#g32)" stroke="#000" stroke-width="1.3"/><rect x="1040.5" y="896" width="9" height="38.299999999999955" fill="url(#g33)" stroke="#000" stroke-width="1.3"/><rect x="1051.5" y="904.5" width="9" height="29.799999999999955" fill="url(#g34)" stroke="#000" stroke-width="1.3"/><rect x="1062.5" y="900.5" width="9" height="33.799999999999955" fill="url(#g35)" stroke="#000" stroke-width="1.3"/><rect x="1108.5" y="877" width="9" height="57.299999999999955" fill="url(#g36)" stroke="#000" stroke-width="1.3"/><rect x="1119.5" y="872.5" width="9" height="61.799999999999955" fill="url(#g37)" stroke="#000" stroke-width="1.3"/><rect x="1130.5" y="860" width="9" height="74.29999999999995" fill="url(#g38)" stroke="#000" stroke-width="1.3"/><rect x="1141.5" y="903" width="9" height="31.299999999999955" fill="url(#g39)" stroke="#000" stroke-width="1.3"/><rect x="1152.5" y="903" width="9" height="31.299999999999955" fill="url(#g40)" stroke="#000" stroke-width="1.3"/><rect x="1163.5" y="890" width="9" height="44.299999999999955" fill="url(#g41)" stroke="#000" stroke-width="1.3"/><path d="M591 675.5 H1200 V941" fill="none" stroke="#8a8a8a" stroke-width="2"/><line x1="591" y1="674.5" x2="591" y2="941" stroke="#8a8a8a" stroke-width="2" /><line x1="591" y1="934.5" x2="1200" y2="934.5" stroke="#8a8a8a" stroke-width="2" /><line x1="692.5" y1="934.5" x2="692.5" y2="941" stroke="#8a8a8a" stroke-width="2" /><line x1="794" y1="934.5" x2="794" y2="941" stroke="#8a8a8a" stroke-width="2" /><line x1="895" y1="934.5" x2="895" y2="941" stroke="#8a8a8a" stroke-width="2" /><line x1="997.5" y1="934.5" x2="997.5" y2="941" stroke="#8a8a8a" stroke-width="2" /><line x1="1099" y1="934.5" x2="1099" y2="941" stroke="#8a8a8a" stroke-width="2" /><line x1="1200" y1="934.5" x2="1200" y2="941" stroke="#8a8a8a" stroke-width="2" /><text x="641" y="952" font-size="15" fill="#ddd" text-anchor="middle" font-weight="normal" >100</text><text x="743" y="952" font-size="15" fill="#ddd" text-anchor="middle" font-weight="normal" >20%</text><text x="844" y="952" font-size="15" fill="#ddd" text-anchor="middle" font-weight="normal" >40%</text><text x="946.5" y="952" font-size="15" fill="#ddd" text-anchor="middle" font-weight="normal" >60%</text><text x="1048" y="952" font-size="15" fill="#ddd" text-anchor="middle" font-weight="normal" >80%</text><text x="1149.5" y="952" font-size="15" fill="#ddd" text-anchor="middle" font-weight="normal" >100%</text><text x="255" y="768" font-size="31.5" fill="#f4f4f4" text-anchor="start" font-weight="normal" textLength="220" lengthAdjust="spacingAndGlyphs" >Current Reading</text><text x="255" y="811.5" font-size="24.5" fill="#f4f4f4" text-anchor="start" font-weight="normal" textLength="103" lengthAdjust="spacingAndGlyphs" >x: 0,4284</text><text x="255" y="853.5" font-size="24.5" fill="#f4f4f4" text-anchor="start" font-weight="normal" textLength="104" lengthAdjust="spacingAndGlyphs" >y: 0,5248</text><text x="255" y="897" font-size="24.5" fill="#f4f4f4" text-anchor="start" font-weight="normal" textLength="96.5" lengthAdjust="spacingAndGlyphs" >fL: 41,92</text><text x="255" y="939.5" font-size="24.5" fill="#f4f4f4" text-anchor="start" font-weight="normal" textLength="174" lengthAdjust="spacingAndGlyphs" >cd/m²: 143,627</text><rect x="1224" y="124" width="688.5" height="591.5" fill="#333" stroke="#C8C800" stroke-width="7"/><text x="1569" y="147" font-size="14" fill="#ddd" text-anchor="middle" font-weight="normal" >CIE 1931 xy</text><rect x="1257" y="152" width="652" height="531" fill="#232323" /><path d="M1270 105 V74 Q1270 69 1275 69 H1450 Q1455 69 1455 74 V105 Z" fill="url(#g42)"/><path d="M1270 105 V74 Q1270 69 1275 69 H1277 V105 Z" fill="#10dd10"/><circle cx="1388.75" cy="87" r="12" fill="url(#g43)"/><path d="M1382.25 85 H1395.25 L1388.75 91.5 Z" fill="#fff"/><line x1="1412.5" y1="72" x2="1412.5" y2="105" stroke="#3a3a3a" stroke-width="1.5" /><circle cx="1437" cy="87" r="15.5" fill="#0000ee" stroke="#fff" stroke-width="1.5"/><text x="1437" y="91.5" font-size="12.5" fill="#fff" text-anchor="middle" font-weight="normal" textLength="17.5" lengthAdjust="spacingAndGlyphs" >234</text><text x="1280.5" y="83" font-size="13" fill="#f0f0f0" text-anchor="start" font-weight="normal" textLength="79" lengthAdjust="spacingAndGlyphs" >X-Rite i1Pro 2</text><text x="1280.5" y="100.5" font-size="13" fill="#f0f0f0" text-anchor="start" font-weight="normal" textLength="92.5" lengthAdjust="spacingAndGlyphs" >LCD Direct View</text><path d="M1462.5 105 V74 Q1462.5 69 1467.5 69 H1613 Q1618 69 1618 74 V105 Z" fill="url(#g44)"/><path d="M1462.5 105 V74 Q1462.5 69 1467.5 69 H1469.5 V105 Z" fill="#eeee00"/><circle cx="1598.75" cy="87" r="12" fill="url(#g45)"/><path d="M1592.25 85 H1605.25 L1598.75 91.5 Z" fill="#fff"/><text x="1473" y="83.5" font-size="13" fill="#f0f0f0" text-anchor="start" font-weight="normal" textLength="40" lengthAdjust="spacingAndGlyphs" >Source</text><path d="M1625.5 105 V74 Q1625.5 69 1630.5 69 H1792.5 Q1797.5 69 1797.5 74 V105 Z" fill="url(#g46)"/><path d="M1625.5 105 V74 Q1625.5 69 1630.5 69 H1632.5 V105 Z" fill="#eeee00"/><circle cx="1778.25" cy="87" r="12" fill="url(#g47)"/><path d="M1771.75 85 H1784.75 L1778.25 91.5 Z" fill="#fff"/><text x="1636.5" y="83.5" font-size="13" fill="#f0f0f0" text-anchor="start" font-weight="normal" textLength="126" lengthAdjust="spacingAndGlyphs" >Direct Display Control</text><rect x="1802.0" y="69.5" width="39.0" height="33" rx="4" fill="url(#g48)" stroke="#c8c8c8" stroke-width="1.2"/><circle cx="1821.5" cy="86" r="12" fill="url(#g49)"/><rect x="1819.9" y="77.8" width="3.2" height="4" fill="#ddd" transform="rotate(0 1821.5 86)"/><rect x="1819.9" y="77.8" width="3.2" height="4" fill="#ddd" transform="rotate(45 1821.5 86)"/><rect x="1819.9" y="77.8" width="3.2" height="4" fill="#ddd" transform="rotate(90 1821.5 86)"/><rect x="1819.9" y="77.8" width="3.2" height="4" fill="#ddd" transform="rotate(135 1821.5 86)"/><rect x="1819.9" y="77.8" width="3.2" height="4" fill="#ddd" transform="rotate(180 1821.5 86)"/><rect x="1819.9" y="77.8" width="3.2" height="4" fill="#ddd" transform="rotate(225 1821.5 86)"/><rect x="1819.9" y="77.8" width="3.2" height="4" fill="#ddd" transform="rotate(270 1821.5 86)"/><rect x="1819.9" y="77.8" width="3.2" height="4" fill="#ddd" transform="rotate(315 1821.5 86)"/><circle cx="1821.5" cy="86" r="5.6" fill="none" stroke="#ddd" stroke-width="3"/><rect x="1845.0" y="69.5" width="39.0" height="33" rx="4" fill="url(#g50)" stroke="#c8c8c8" stroke-width="1.2"/><circle cx="1864.5" cy="86" r="12" fill="url(#g51)"/><text x="1864.5" y="93" font-size="18" fill="#eee" text-anchor="middle" font-weight="bold" >?</text><path d="M1920 69.5 H1892 Q1888 69.5 1888 73.5 V98.5 Q1888 102.5 1892 102.5 H1920" fill="url(#g52)" stroke="#c8c8c8" stroke-width="1.2"/><circle cx="1904" cy="86" r="12" fill="url(#g53)"/><path d="M1900 86 L1907 79.5 V92.5 Z" fill="#fff"/><rect x="1917" y="105.5" width="3" height="931" fill="#232323" /><rect x="1222" y="728" width="20" height="32.5" fill="#000" /><rect x="1242" y="728" width="644" height="32.5" fill="url(#g54)" /><clipPath id="hclip"><rect x="1222" y="720" width="664" height="45"/></clipPath><g clip-path="url(#hclip)"><text x="1412.5" y="751.5" font-size="16.5" fill="#f4f4f4" text-anchor="start" font-weight="normal" textLength="39.5" lengthAdjust="spacingAndGlyphs" >20%</text><text x="1521.5" y="751.5" font-size="16.5" fill="#f4f4f4" text-anchor="start" font-weight="normal" textLength="39.5" lengthAdjust="spacingAndGlyphs" >40%</text><text x="1630.5" y="751.5" font-size="16.5" fill="#f4f4f4" text-anchor="start" font-weight="normal" textLength="39.5" lengthAdjust="spacingAndGlyphs" >60%</text><text x="1739.5" y="751.5" font-size="16.5" fill="#f4f4f4" text-anchor="start" font-weight="normal" textLength="39.5" lengthAdjust="spacingAndGlyphs" >80%</text><text x="1848.5" y="751.5" font-size="16.5" fill="#f4f4f4" text-anchor="start" font-weight="normal" textLength="50" lengthAdjust="spacingAndGlyphs" >100%</text></g><clipPath id="tclip"><rect x="1222" y="760" width="664" height="175.5"/></clipPath><g clip-path="url(#tclip)"><rect x="1222" y="760.5" width="20" height="29.85" fill="url(#g55)" /><rect x="1242" y="760.5" width="644" height="29.85" fill="#3d3d3d" /><text x="1248.5" y="782.7" font-size="18.5" fill="#f2f2f2" text-anchor="start" font-weight="normal" textLength="79.7" lengthAdjust="spacingAndGlyphs" >x: CIE31</text><text x="1412.5" y="782.7" font-size="18.5" fill="#f2f2f2" text-anchor="start" font-weight="normal" textLength="67.5" lengthAdjust="spacingAndGlyphs" >0,3435</text><text x="1521.5" y="782.7" font-size="18.5" fill="#f2f2f2" text-anchor="start" font-weight="normal" textLength="67.5" lengthAdjust="spacingAndGlyphs" >0,3648</text><text x="1630.5" y="782.7" font-size="18.5" fill="#f2f2f2" text-anchor="start" font-weight="normal" textLength="67.5" lengthAdjust="spacingAndGlyphs" >0,3846</text><text x="1739.5" y="782.7" font-size="18.5" fill="#f2f2f2" text-anchor="start" font-weight="normal" textLength="67.5" lengthAdjust="spacingAndGlyphs" >0,4053</text><text x="1848.5" y="782.7" font-size="18.5" fill="#f2f2f2" text-anchor="start" font-weight="normal" textLength="67.5" lengthAdjust="spacingAndGlyphs" >0,4284</text><rect x="1222" y="790.35" width="20" height="29.85" fill="url(#g55)" /><rect x="1242" y="790.35" width="644" height="29.85" fill="#858585" /><text x="1248.5" y="812.5500000000001" font-size="18.5" fill="#f2f2f2" text-anchor="start" font-weight="normal" textLength="81" lengthAdjust="spacingAndGlyphs" >y: CIE31</text><text x="1412.5" y="812.5500000000001" font-size="18.5" fill="#f2f2f2" text-anchor="start" font-weight="normal" textLength="67.5" lengthAdjust="spacingAndGlyphs" >0,3755</text><text x="1521.5" y="812.5500000000001" font-size="18.5" fill="#f2f2f2" text-anchor="start" font-weight="normal" textLength="67.5" lengthAdjust="spacingAndGlyphs" >0,4138</text><text x="1630.5" y="812.5500000000001" font-size="18.5" fill="#f2f2f2" text-anchor="start" font-weight="normal" textLength="67.5" lengthAdjust="spacingAndGlyphs" >0,4494</text><text x="1739.5" y="812.5500000000001" font-size="18.5" fill="#f2f2f2" text-anchor="start" font-weight="normal" textLength="67.5" lengthAdjust="spacingAndGlyphs" >0,4843</text><text x="1848.5" y="812.5500000000001" font-size="18.5" fill="#f2f2f2" text-anchor="start" font-weight="normal" textLength="67.5" lengthAdjust="spacingAndGlyphs" >0,5248</text><rect x="1222" y="820.2" width="20" height="29.85" fill="url(#g55)" /><rect x="1242" y="820.2" width="644" height="29.85" fill="#3d3d3d" /><text x="1248.5" y="842.4000000000001" font-size="18.5" fill="#f2f2f2" text-anchor="start" font-weight="normal" textLength="14" lengthAdjust="spacingAndGlyphs" >Y</text><text x="1412.5" y="842.4000000000001" font-size="18.5" fill="#f2f2f2" text-anchor="start" font-weight="normal" textLength="94" lengthAdjust="spacingAndGlyphs" >156,6062</text><text x="1521.5" y="842.4000000000001" font-size="18.5" fill="#f2f2f2" text-anchor="start" font-weight="normal" textLength="94" lengthAdjust="spacingAndGlyphs" >156,6660</text><text x="1630.5" y="842.4000000000001" font-size="18.5" fill="#f2f2f2" text-anchor="start" font-weight="normal" textLength="94" lengthAdjust="spacingAndGlyphs" >152,4577</text><text x="1739.5" y="842.4000000000001" font-size="18.5" fill="#f2f2f2" text-anchor="start" font-weight="normal" textLength="94" lengthAdjust="spacingAndGlyphs" >147,3228</text><text x="1848.5" y="842.4000000000001" font-size="18.5" fill="#f2f2f2" text-anchor="start" font-weight="normal" textLength="94" lengthAdjust="spacingAndGlyphs" >143,6270</text><rect x="1222" y="850.05" width="20" height="29.85" fill="url(#g55)" /><rect x="1242" y="850.05" width="644" height="29.85" fill="#858585" /><text x="1248.5" y="872.25" font-size="18.5" fill="#f2f2f2" text-anchor="start" font-weight="normal" textLength="147.6" lengthAdjust="spacingAndGlyphs" >Target x:CIE31</text><text x="1412.5" y="872.25" font-size="18.5" fill="#f2f2f2" text-anchor="start" font-weight="normal" textLength="67.5" lengthAdjust="spacingAndGlyphs" >0,3344</text><text x="1521.5" y="872.25" font-size="18.5" fill="#f2f2f2" text-anchor="start" font-weight="normal" textLength="67.5" lengthAdjust="spacingAndGlyphs" >0,3564</text><text x="1630.5" y="872.25" font-size="18.5" fill="#f2f2f2" text-anchor="start" font-weight="normal" textLength="67.5" lengthAdjust="spacingAndGlyphs" >0,3773</text><text x="1739.5" y="872.25" font-size="18.5" fill="#f2f2f2" text-anchor="start" font-weight="normal" textLength="67.5" lengthAdjust="spacingAndGlyphs" >0,3969</text><text x="1848.5" y="872.25" font-size="18.5" fill="#f2f2f2" text-anchor="start" font-weight="normal" textLength="67.5" lengthAdjust="spacingAndGlyphs" >0,4193</text><rect x="1222" y="879.9" width="20" height="29.85" fill="url(#g55)" /><rect x="1242" y="879.9" width="644" height="29.85" fill="#3d3d3d" /><text x="1248.5" y="902.1" font-size="18.5" fill="#f2f2f2" text-anchor="start" font-weight="normal" textLength="147.6" lengthAdjust="spacingAndGlyphs" >Target y:CIE31</text><text x="1412.5" y="902.1" font-size="18.5" fill="#f2f2f2" text-anchor="start" font-weight="normal" textLength="67.5" lengthAdjust="spacingAndGlyphs" >0,3648</text><text x="1521.5" y="902.1" font-size="18.5" fill="#f2f2f2" text-anchor="start" font-weight="normal" textLength="67.5" lengthAdjust="spacingAndGlyphs" >0,4013</text><text x="1630.5" y="902.1" font-size="18.5" fill="#f2f2f2" text-anchor="start" font-weight="normal" textLength="67.5" lengthAdjust="spacingAndGlyphs" >0,4358</text><text x="1739.5" y="902.1" font-size="18.5" fill="#f2f2f2" text-anchor="start" font-weight="normal" textLength="67.5" lengthAdjust="spacingAndGlyphs" >0,4682</text><text x="1848.5" y="902.1" font-size="18.5" fill="#f2f2f2" text-anchor="start" font-weight="normal" textLength="67.5" lengthAdjust="spacingAndGlyphs" >0,5053</text><rect x="1222" y="909.75" width="20" height="29.85" fill="url(#g55)" /><rect x="1242" y="909.75" width="644" height="29.85" fill="#858585" /><text x="1248.5" y="931.95" font-size="18.5" fill="#f2f2f2" text-anchor="start" font-weight="normal" textLength="86.5" lengthAdjust="spacingAndGlyphs" >Target Y</text><text x="1412.5" y="931.95" font-size="18.5" fill="#f2f2f2" text-anchor="start" font-weight="normal" textLength="94" lengthAdjust="spacingAndGlyphs" >153,6819</text><text x="1521.5" y="931.95" font-size="18.5" fill="#f2f2f2" text-anchor="start" font-weight="normal" textLength="94" lengthAdjust="spacingAndGlyphs" >150,9843</text><text x="1630.5" y="931.95" font-size="18.5" fill="#f2f2f2" text-anchor="start" font-weight="normal" textLength="94" lengthAdjust="spacingAndGlyphs" >148,9116</text><text x="1739.5" y="931.95" font-size="18.5" fill="#f2f2f2" text-anchor="start" font-weight="normal" textLength="94" lengthAdjust="spacingAndGlyphs" >147,2850</text><text x="1848.5" y="931.95" font-size="18.5" fill="#f2f2f2" text-anchor="start" font-weight="normal" textLength="94" lengthAdjust="spacingAndGlyphs" >145,1000</text></g><rect x="1886.5" y="760.5" width="23" height="174" fill="#575757" /><rect x="1889" y="762" width="19" height="16" rx="3" fill="#6a6a6a" stroke="#7a7a7a"/><path d="M1893 774 L1898.5 767.5 L1904 774 Z" fill="#3a3a3a"/><rect x="1888.7" y="781" width="19" height="111" rx="8" fill="#3e3e3e"/><rect x="1889" y="917.5" width="19" height="16" rx="3" fill="#6a6a6a" stroke="#7a7a7a"/><path d="M1893 922 L1898.5 928.5 L1904 922 Z" fill="#3a3a3a"/><rect x="1242" y="935.5" width="644" height="17.5" fill="#575757" /><rect x="1244" y="937" width="20" height="14" rx="3" fill="#6a6a6a" stroke="#7a7a7a"/><path d="M1258 939.5 L1250.5 944 L1258 948.5 Z" fill="#3a3a3a"/><rect x="1268" y="937" width="540" height="14" rx="7" fill="#3e3e3e"/><rect x="1864.5" y="937" width="20" height="14" rx="3" fill="#6a6a6a" stroke="#7a7a7a"/><path d="M1871 939.5 L1878.5 944 L1871 948.5 Z" fill="#3a3a3a"/><rect x="240" y="962" width="972" height="74" fill="url(#g56)" /><path d="M1212 1036 V968 Q1212 962 1218 962 H1532 V1036 Z" fill="url(#g57)"/><rect x="241.5" y="962.5" width="53" height="73" rx="5" fill="url(#g58)"/><circle cx="268" cy="973.3" r="9" fill="url(#g59)"/><path d="M262.5 976.5 H273.5 L268 970 Z" fill="#111"/><rect x="247" y="993.5" width="42.5" height="36.5" rx="4" fill="#ffff00" stroke="#c8c800" stroke-width="0.8"/><rect x="302.7" y="962.5" width="179.2" height="73" rx="5" fill="url(#g58)"/><rect x="308.9" y="969" width="167.7" height="43" rx="4" fill="#C1C1A3" stroke="#777" stroke-width="1.2"/><text x="392.29999999999995" y="1030" font-size="12.5" fill="#262626" text-anchor="middle" font-weight="bold" textLength="25" lengthAdjust="spacingAndGlyphs" >20%</text><rect x="484.79999999999995" y="962.5" width="179.2" height="73" rx="5" fill="url(#g58)"/><rect x="490.99999999999994" y="969" width="167.7" height="43" rx="4" fill="#C2C287" stroke="#777" stroke-width="1.2"/><text x="574.4" y="1030" font-size="12.5" fill="#262626" text-anchor="middle" font-weight="bold" textLength="25" lengthAdjust="spacingAndGlyphs" >40%</text><rect x="666.9" y="962.5" width="179.2" height="73" rx="5" fill="url(#g58)"/><rect x="673.1" y="969" width="167.7" height="43" rx="4" fill="#C2C26C" stroke="#777" stroke-width="1.2"/><text x="756.5" y="1030" font-size="12.5" fill="#262626" text-anchor="middle" font-weight="bold" textLength="25" lengthAdjust="spacingAndGlyphs" >60%</text><rect x="849.0" y="962.5" width="179.2" height="73" rx="5" fill="url(#g58)"/><rect x="855.2" y="969" width="167.7" height="43" rx="4" fill="#C1C14E" stroke="#777" stroke-width="1.2"/><text x="938.6" y="1030" font-size="12.5" fill="#262626" text-anchor="middle" font-weight="bold" textLength="25" lengthAdjust="spacingAndGlyphs" >80%</text><rect x="1031.5" y="962.5" width="180.5" height="72.5" rx="5" fill="url(#g60)"/><rect x="1038" y="968" width="168" height="44" rx="4" fill="#C4C000" stroke="#9a9600" stroke-width="1"/><text x="1121.5" y="1030" font-size="13" fill="#fff" text-anchor="middle" font-weight="bold" textLength="32" lengthAdjust="spacingAndGlyphs" >100%</text><rect x="1532.5" y="962.5" width="57" height="73" rx="5" fill="url(#g61)"/><line x1="1533" y1="984.5" x2="1589" y2="984.5" stroke="#5a5a5a" stroke-width="1.5" /><circle cx="1561" cy="972.5" r="9" fill="url(#g59)"/><path d="M1555.5 975.5 H1566.5 L1561 969.5 Z" fill="#111"/><rect x="1543.5" y="992" width="36" height="36" rx="6" fill="#cfcfcf" stroke="#1c1c1c" stroke-width="3"/><rect x="1553" y="1001.5" width="16.5" height="16.5" fill="#111"/><rect x="1591" y="962.5" width="55" height="35" rx="4" fill="url(#g61)"/><rect x="1647.5" y="962.5" width="53.0" height="35" rx="4" fill="url(#g61)"/><rect x="1701.5" y="962.5" width="53.0" height="35" rx="4" fill="url(#g61)"/><rect x="1755.5" y="962.5" width="53.0" height="35" rx="4" fill="url(#g61)"/><rect x="1809.5" y="962" width="53" height="36" fill="#2c2c2c"/><rect x="1863.5" y="962.5" width="58" height="35" rx="4" fill="url(#g61)"/><circle cx="1618.8" cy="980" r="12" fill="url(#g62)"/><circle cx="1673.9" cy="980" r="12" fill="url(#g62)"/><circle cx="1727.5" cy="980" r="12" fill="url(#g62)"/><circle cx="1782.2" cy="980" r="12" fill="url(#g62)"/><circle cx="1891" cy="980" r="12" fill="url(#g62)"/><circle cx="1835.8" cy="980" r="12" fill="#262626"/><rect x="1613.5" y="975" width="10.5" height="10.5" fill="#2e2e2e"/><path d="M1670 973.5 L1680.5 980 L1670 986.5 Z" fill="#2e2e2e"/><path d="M1723 973 H1720.5 V987 H1723 M1732 973 H1734.5 V987 H1732" fill="none" stroke="#2e2e2e" stroke-width="2"/><path d="M1724.5 980 H1730.5" stroke="#2e2e2e" stroke-width="1.6" stroke-dasharray="1.5 1"/><path d="M1782.2 980 C1778 975 1774 975 1774 980 C1774 985 1778 985 1782.2 980 C1786.4 975 1790.4 975 1790.4 980 C1790.4 985 1786.4 985 1782.2 980 Z" fill="none" stroke="#2e2e2e" stroke-width="2.2"/><path d="M1830 978 A6.5 6.5 0 0 1 1841 975 M1841.5 982 A6.5 6.5 0 0 1 1830.5 985" fill="none" stroke="#1a1a1a" stroke-width="2.5"/><rect x="1591" y="1000" width="163.5" height="35.5" rx="4" fill="url(#g61)"/><rect x="1755.5" y="1000" width="165.5" height="35.5" rx="4" fill="url(#g61)"/><circle cx="1628.6" cy="1017.5" r="12" fill="url(#g62)"/><circle cx="1884" cy="1017.5" r="12" fill="url(#g62)"/><path d="M1627 1012 L1622 1017.5 L1627 1023 M1632 1012 L1627 1017.5 L1632 1023" fill="none" stroke="#333" stroke-width="1.8"/><path d="M1881 1012 L1886 1017.5 L1881 1023 M1886 1012 L1891 1017.5 L1886 1023" fill="none" stroke="#333" stroke-width="1.8"/><text x="1660.5" y="1027.5" font-size="27" fill="#353535" text-anchor="start" font-weight="bold" textLength="61" lengthAdjust="spacingAndGlyphs" >Back</text><text x="1788.5" y="1027.5" font-size="27" fill="#353535" text-anchor="start" font-weight="bold" textLength="62" lengthAdjust="spacingAndGlyphs" >Next</text><rect x="0" y="1036" width="1920" height="44" fill="#5E4B2D" /><path d="M688 1036 H968 V1080 H688 Z" fill="url(#g63)"/><path d="M699 1080 C700 1066 704 1054 722 1052 C745 1050 770 1062 800 1072 C815 1077 825 1079 832 1080 Z" fill="#5E4B2D"/><path d="M701 1080 C702 1066 706 1057 722 1055 C745 1053 770 1064 800 1074 C812 1078 820 1079 826 1080" fill="none" stroke="#a88a58" stroke-width="1"/><path d="M750 1038 C765 1044 780 1050 800 1054 C790 1048 775 1042 760 1037 Z" fill="#6a5030" opacity="0.9"/><path d="M880 1037 C905 1045 930 1056 955 1072 L960 1060 C940 1048 915 1040 895 1037 Z" fill="#6a4a2a" opacity="0.85"/><path d="M830 1066 C850 1070 870 1076 890 1080 H840 Z" fill="#8a5a30" opacity="0.6"/><path d="M967 1036 V1080" stroke="#c8b028" stroke-width="2.2"/><path d="M11 1046.5 L25.5 1044.5 V1057 H11 Z M27.5 1044.2 L43 1042 V1057 H27.5 Z M11 1058.5 H25.5 V1071 L11 1069 Z M27.5 1058.5 H43 V1073.5 L27.5 1071.3 Z" fill="#fff"/><rect x="55.5" y="1037.5" width="61" height="42" fill="#7e6c52" stroke="#8e7e66" stroke-width="1"/><rect x="500.5" y="1037.5" width="61" height="42" fill="#7e6c52" stroke="#8e7e66" stroke-width="1"/><rect x="564" y="1037.5" width="59" height="42" fill="#a39682" stroke="#d0c8b8" stroke-width="1"/><rect x="627.5" y="1037.5" width="61" height="42" fill="#7e6c52" stroke="#8e7e66" stroke-width="1" opacity="0.8"/><path d="M69 1043 H80 L83 1046 H102 V1066 H69 Z" fill="#d8b858"/><rect x="74" y="1042" width="24" height="9" fill="#f4f4f4"/><rect x="77" y="1043" width="5" height="2.5" fill="#40a040"/><rect x="84" y="1045" width="5" height="2.5" fill="#e04040"/><rect x="91" y="1047" width="5" height="2.5" fill="#4080e0"/><path d="M68.5 1049 H103 V1067 H68.5 Z" fill="#f2d478"/><path d="M68.5 1049 H103 V1052 H68.5 Z" fill="#fae6a0"/><path d="M73 1062 H100 V1076 H73 Z" fill="#3a98d8"/><path d="M73 1062 H100 V1065 H73 Z" fill="#7cc4f0"/><rect x="82" y="1066" width="10" height="4" fill="#e8f4fc"/><rect x="131" y="1040.5" width="36" height="35.5" fill="#0c9a1a"/><path d="M137 1050 H161 V1071 H137 Z" fill="#fff"/><path d="M143 1050 C143 1042 155 1042 155 1050" fill="none" stroke="#fff" stroke-width="2"/><path d="M142 1054 H147.5 V1059.5 H142 Z M149.5 1054 H155.5 V1059.5 H149.5 Z M142 1061.5 H147.5 V1067 H142 Z M149.5 1061.5 H155.5 V1067 H149.5 Z" fill="#0c9a1a"/><rect x="194" y="1039" width="38" height="38" rx="5" fill="#20a8ec"/><path d="M232 1055 V1072 Q232 1077 227 1077 H212 Z" fill="#1a88c8"/><path d="M201 1052 H225 V1068 H201 Z" fill="#fff"/><path d="M201 1052 H225 V1056 H201Z" fill="#d8eef8"/><path d="M207 1058 C209 1064 217 1064 219 1058" fill="none" stroke="#20a8ec" stroke-width="2"/><rect x="257" y="1039" width="39" height="39" fill="#fff"/><path d="M262 1064 L272.5 1040 H280 L291 1064 H284 L276.5 1046 L270 1064 Z" fill="#e02020"/><path d="M262 1040 H271 L262 1062 Z M282 1040 H291 V1062 Z" fill="#e02020"/><text x="276.5" y="1077" font-size="12" fill="#111" text-anchor="middle" font-weight="bold" textLength="35" lengthAdjust="spacingAndGlyphs" >Adobe</text><path d="M327 1063 C325 1040 354 1040 354 1063" fill="none" stroke="#f0a020" stroke-width="4.5"/><rect x="329" y="1058" width="8" height="17" rx="3" fill="#707070"/><rect x="343" y="1058" width="8" height="17" rx="3" fill="#707070"/><rect x="325" y="1060" width="5" height="12" rx="2" fill="#f0a020"/><rect x="350" y="1060" width="5" height="12" rx="2" fill="#f0a020"/><rect x="384" y="1039" width="39" height="30" fill="#fff"/><rect x="386.5" y="1041.5" width="34" height="25" fill="#1e64b4"/><path d="M396 1069 H411 L414 1077 H393 Z" fill="#f0f0f0"/><text x="403.5" y="1056" font-size="8.5" fill="#fff" text-anchor="middle" font-weight="bold" textLength="28" lengthAdjust="spacingAndGlyphs" font-style="italic">lenovo</text><rect x="448" y="1039" width="38" height="38" fill="#dd1818"/><path d="M467 1046 L477 1051.5 V1064 L467 1069.5 L457 1064 V1051.5 Z M457 1051.5 L467 1057 L477 1051.5 M467 1057 V1069.5" fill="none" stroke="#fff" stroke-width="2" stroke-linejoin="round"/><rect x="513" y="1039.5" width="36" height="37" rx="3" fill="#e4e4e4" stroke="#aaa"/><rect x="517" y="1043" width="28" height="26" fill="#5a5a5a"/><rect x="523" y="1048" width="8" height="21" fill="#2a8ad8"/><path d="M579 1041 Q581 1038 585 1041 L609 1062 Q612 1065 609 1068 L593 1077 Q589 1079 587 1076 Q574 1058 579 1041 Z" fill="#031a03"/><ellipse cx="591" cy="1059" rx="14" ry="15" fill="url(#cg5)"/><text x="591.5" y="1066" font-size="17" fill="#000" text-anchor="middle" font-weight="bold" stroke="#3aff3a" stroke-width="0.8">5</text><ellipse cx="657" cy="1062" rx="17" ry="12" fill="#c8e0f0" stroke="#88a8c0"/><circle cx="646" cy="1060" r="3" fill="#e03030"/><circle cx="652" cy="1054" r="3" fill="#40b040"/><circle cx="660" cy="1052" r="3" fill="#f0b020"/><circle cx="653" cy="1062" r="2" fill="#555"/><path d="M656 1076 L672 1042" stroke="#e08020" stroke-width="3"/><path d="M670 1046 L675 1039" stroke="#d0c0a0" stroke-width="4"/><rect x="1514" y="1048.5" width="34" height="20" rx="2" fill="none" stroke="#fff" stroke-width="2"/><rect x="1517.0" y="1052.0" width="3" height="3" fill="#fff"/><rect x="1521.3" y="1052.0" width="3" height="3" fill="#fff"/><rect x="1525.6" y="1052.0" width="3" height="3" fill="#fff"/><rect x="1529.9" y="1052.0" width="3" height="3" fill="#fff"/><rect x="1534.2" y="1052.0" width="3" height="3" fill="#fff"/><rect x="1538.5" y="1052.0" width="3" height="3" fill="#fff"/><rect x="1542.8" y="1052.0" width="3" height="3" fill="#fff"/><rect x="1517.0" y="1056.5" width="3" height="3" fill="#fff"/><rect x="1521.3" y="1056.5" width="3" height="3" fill="#fff"/><rect x="1525.6" y="1056.5" width="3" height="3" fill="#fff"/><rect x="1529.9" y="1056.5" width="3" height="3" fill="#fff"/><rect x="1534.2" y="1056.5" width="3" height="3" fill="#fff"/><rect x="1538.5" y="1056.5" width="3" height="3" fill="#fff"/><rect x="1542.8" y="1056.5" width="3" height="3" fill="#fff"/><rect x="1520" y="1062" width="22" height="3" fill="#fff"/><path d="M1561 1043 V1050 M1573 1043 V1050" stroke="#fff" stroke-width="2.5"/><path d="M1558 1050 H1577 V1060 C1577 1066 1572 1068 1567.5 1068 C1563 1068 1558 1066 1558 1060 Z" fill="#fff"/><path d="M1567.5 1068 V1073" stroke="#fff" stroke-width="2.5"/><path d="M1561.5 1057.5 L1565.5 1062 L1573.5 1053" fill="none" stroke="#20a0e0" stroke-width="2.5"/><rect x="1582" y="1045" width="50" height="27" fill="#22c060" stroke="#fff" stroke-width="2"/><rect x="1632" y="1051" width="4.5" height="15" fill="#fff"/><text x="1606" y="1066" font-size="17" fill="#fff" text-anchor="middle" font-weight="normal" textLength="43" lengthAdjust="spacingAndGlyphs" >100%</text><circle cx="1628" cy="1044.5" r="7" fill="#f01020"/><path d="M1645 1063 L1650 1057.5 L1655 1063 Z" fill="#ddd"/><rect x="1670" y="1050" width="18.5" height="18.5" fill="#f08a28"/><circle cx="1679.2" cy="1059.2" r="6" fill="none" stroke="#fff" stroke-width="1.8"/><path d="M1679.2 1059.2 V1064 M1679.2 1059.2 L1674.5 1056.5 M1679.2 1059.2 L1684 1056.5" stroke="#fff" stroke-width="1.6"/><path d="M1699 1050 V1072" stroke="#fff" stroke-width="1.8"/><path d="M1700 1051 C1706 1049 1710 1054 1716 1052 V1061 C1710 1063 1706 1058 1700 1060 Z" fill="#fff"/><circle cx="1713" cy="1068.5" r="4.5" fill="#e02020"/><path d="M1711 1066.5 L1715 1070.5 M1715 1066.5 L1711 1070.5" stroke="#fff" stroke-width="1.2"/><rect x="1728" y="1063" width="2.5" height="3" fill="#fff"/><rect x="1732" y="1060" width="2.5" height="6" fill="#fff"/><rect x="1736" y="1057" width="2.5" height="9" fill="#888"/><rect x="1740" y="1054" width="2.5" height="12" fill="#888"/><rect x="1744" y="1051" width="2.5" height="15" fill="#888"/><path d="M1758 1056 H1762 L1768 1051 V1069 L1762 1064 H1758 Z" fill="#fff"/><path d="M1772 1055 C1775 1058 1775 1062 1772 1065" fill="none" stroke="#888" stroke-width="1.2"/><text x="1791" y="1065" font-size="14" fill="#f0f0f0" text-anchor="start" font-weight="normal" textLength="25.5" lengthAdjust="spacingAndGlyphs" >DEU</text><text x="1854.5" y="1055.5" font-size="14" fill="#f0f0f0" text-anchor="start" font-weight="normal" textLength="33" lengthAdjust="spacingAndGlyphs" >17:25</text><text x="1836" y="1075" font-size="14" fill="#f0f0f0" text-anchor="start" font-weight="normal" textLength="67.5" lengthAdjust="spacingAndGlyphs" >03.11.2014</text><polygon points="1391.9,679.2 1391.7,679.3 1391.3,679.4 1390.8,679.4 1389.8,679.2 1387.9,678.0 1384.4,675.5 1378.4,671.2 1368.6,663.7 1353.2,645.9 1341.9,627.6 1327.8,598.7 1310.2,555.8 1292.2,496.3 1275.2,422.0 1263.4,342.7 1260.0,269.2 1267.8,209.0 1287.1,170.0 1314.6,156.3 1345.5,161.1 1376.9,173.9 1406.5,189.2 1434.9,206.4 1463.0,225.4 1490.7,245.6 1518.4,266.6 1546.2,288.3 1573.7,310.4 1601.2,332.4 1628.1,354.2 1654.2,375.4 1679.2,395.7 1702.8,414.7 1724.2,432.2 1742.9,447.4 1773.0,471.6 1792.9,487.9 1805.6,498.1 1814.2,505.2 1819.7,509.5 1825.4,514.2 1826.4,515.0" fill="url(#g64)"/><polygon points="1753.0,474.2 1826.4,515.0 1391.9,679.2 1373.2,644.5" fill="#7a0050"/><polygon points="1489.5,303.8 1518.4,266.6 1546.2,288.3 1573.7,310.4 1601.2,332.4 1628.1,354.2 1654.2,375.4 1679.2,395.7 1702.8,414.7 1724.2,432.2 1742.9,447.4 1773.0,471.6 1792.9,487.9 1805.6,498.1 1814.2,505.2 1819.7,509.5 1825.4,514.2 1826.4,515.0 1753.0,474.2" fill="url(#g66)"/><polygon points="1753.0,474.2 1826.4,515.0 1391.9,679.2 1373.2,644.5" fill="url(#g67)"/><polygon points="1753.0,474.2 1489.5,303.8 1373.2,644.5" fill="#000000"/><g style="isolation:isolate"><polygon points="1753.0,474.2 1489.5,303.8 1373.2,644.5" fill="#000"/><polygon points="1753.0,474.2 1489.5,303.8 1373.2,644.5" fill="url(#fbR)" style="mix-blend-mode:screen"/><polygon points="1753.0,474.2 1489.5,303.8 1373.2,644.5" fill="url(#fbG)" style="mix-blend-mode:screen"/><polygon points="1753.0,474.2 1489.5,303.8 1373.2,644.5" fill="url(#fbB)" style="mix-blend-mode:screen"/></g><rect x="1723.5" y="152.5" width="185" height="192.5" fill="url(#g68)"/><polygon points="1723.5,152.5 1908.5,152.5 1908.5,324.3 1723.5,173.1" fill="#8a9000"/></svg><canvas id="cie" width="652" height="531" style="position:absolute;left:1257px;top:152px"></canvas><canvas id="ins" width="186" height="193" style="position:absolute;left:1723px;top:152px"></canvas><svg width="1920" height="1080" viewBox="0 0 1920 1080" style="position:absolute;left:0;top:0" font-family='"Liberation Sans", sans-serif'><line x1="1257" y1="152.5" x2="1723" y2="152.5" stroke="#8a8a8a" stroke-width="2" /><line x1="1257" y1="151.5" x2="1257" y2="689" stroke="#8a8a8a" stroke-width="2" /><line x1="1256" y1="682.5" x2="1909" y2="682.5" stroke="#8a8a8a" stroke-width="2" /><line x1="1250" y1="682.4" x2="1257" y2="682.4" stroke="#ddd" stroke-width="1.5" /><text x="1249" y="687.4" font-size="13.5" fill="#ddd" text-anchor="end" font-weight="normal" >0</text><line x1="1257.0" y1="682.5" x2="1257.0" y2="689" stroke="#8a8a8a" stroke-width="2" /><text x="1257.0" y="705" font-size="13.5" fill="#ddd" text-anchor="middle" font-weight="normal" >0</text><line x1="1250" y1="619.3" x2="1257" y2="619.3" stroke="#ddd" stroke-width="1.5" /><text x="1249" y="624.3" font-size="13.5" fill="#ddd" text-anchor="end" font-weight="normal" >0,1</text><line x1="1334.5" y1="682.5" x2="1334.5" y2="689" stroke="#8a8a8a" stroke-width="2" /><text x="1334.5" y="705" font-size="13.5" fill="#ddd" text-anchor="middle" font-weight="normal" >0,1</text><line x1="1250" y1="556.1999999999999" x2="1257" y2="556.1999999999999" stroke="#ddd" stroke-width="1.5" /><text x="1249" y="561.1999999999999" font-size="13.5" fill="#ddd" text-anchor="end" font-weight="normal" >0,2</text><line x1="1412.0" y1="682.5" x2="1412.0" y2="689" stroke="#8a8a8a" stroke-width="2" /><text x="1412.0" y="705" font-size="13.5" fill="#ddd" text-anchor="middle" font-weight="normal" >0,2</text><line x1="1250" y1="493.1" x2="1257" y2="493.1" stroke="#ddd" stroke-width="1.5" /><text x="1249" y="498.1" font-size="13.5" fill="#ddd" text-anchor="end" font-weight="normal" >0,3</text><line x1="1489.5" y1="682.5" x2="1489.5" y2="689" stroke="#8a8a8a" stroke-width="2" /><text x="1489.5" y="705" font-size="13.5" fill="#ddd" text-anchor="middle" font-weight="normal" >0,3</text><line x1="1250" y1="430.0" x2="1257" y2="430.0" stroke="#ddd" stroke-width="1.5" /><text x="1249" y="435.0" font-size="13.5" fill="#ddd" text-anchor="end" font-weight="normal" >0,4</text><line x1="1567.0" y1="682.5" x2="1567.0" y2="689" stroke="#8a8a8a" stroke-width="2" /><text x="1567.0" y="705" font-size="13.5" fill="#ddd" text-anchor="middle" font-weight="normal" >0,4</text><line x1="1250" y1="366.9" x2="1257" y2="366.9" stroke="#ddd" stroke-width="1.5" /><text x="1249" y="371.9" font-size="13.5" fill="#ddd" text-anchor="end" font-weight="normal" >0,5</text><line x1="1644.5" y1="682.5" x2="1644.5" y2="689" stroke="#8a8a8a" stroke-width="2" /><text x="1644.5" y="705" font-size="13.5" fill="#ddd" text-anchor="middle" font-weight="normal" >0,5</text><line x1="1250" y1="303.8" x2="1257" y2="303.8" stroke="#ddd" stroke-width="1.5" /><text x="1249" y="308.8" font-size="13.5" fill="#ddd" text-anchor="end" font-weight="normal" >0,6</text><line x1="1722.0" y1="682.5" x2="1722.0" y2="689" stroke="#8a8a8a" stroke-width="2" /><text x="1722.0" y="705" font-size="13.5" fill="#ddd" text-anchor="middle" font-weight="normal" >0,6</text><line x1="1250" y1="240.7" x2="1257" y2="240.7" stroke="#ddd" stroke-width="1.5" /><text x="1249" y="245.7" font-size="13.5" fill="#ddd" text-anchor="end" font-weight="normal" >0,7</text><line x1="1799.5" y1="682.5" x2="1799.5" y2="689" stroke="#8a8a8a" stroke-width="2" /><text x="1799.5" y="705" font-size="13.5" fill="#ddd" text-anchor="middle" font-weight="normal" >0,7</text><line x1="1250" y1="177.59999999999997" x2="1257" y2="177.59999999999997" stroke="#ddd" stroke-width="1.5" /><text x="1249" y="182.59999999999997" font-size="13.5" fill="#ddd" text-anchor="end" font-weight="normal" >0,8</text><line x1="1877.0" y1="682.5" x2="1877.0" y2="689" stroke="#8a8a8a" stroke-width="2" /><text x="1877.0" y="705" font-size="13.5" fill="#ddd" text-anchor="middle" font-weight="normal" >0,8</text><rect x="1723.5" y="152.5" width="185" height="192.5" fill="none" stroke="#999" stroke-width="1.5"/><rect x="1481.3" y="294.9" width="15" height="15" fill="none" stroke="#fff" stroke-width="2"/><rect x="1484.4" y="332.0" width="15" height="15" fill="none" stroke="#fff" stroke-width="2"/><rect x="1485.6" y="365.2" width="15" height="15" fill="none" stroke="#fff" stroke-width="2"/><rect x="1487.0" y="398.8" width="15" height="15" fill="none" stroke="#fff" stroke-width="2"/><rect x="1489.7" y="432.0" width="15" height="15" fill="none" stroke="#fff" stroke-width="2"/><rect x="1574.8" y="355.0" width="15" height="15" fill="none" stroke="#fff" stroke-width="2"/><rect x="1557.1" y="379.0" width="15" height="15" fill="none" stroke="#fff" stroke-width="2"/><rect x="1541.6" y="398.8" width="15" height="15" fill="none" stroke="#fff" stroke-width="2"/><rect x="1524.9" y="420.6" width="15" height="15" fill="none" stroke="#fff" stroke-width="2"/><rect x="1507.6" y="443.2" width="15" height="15" fill="none" stroke="#fff" stroke-width="2"/><rect x="1422.4" y="466.1" width="15" height="15" fill="none" stroke="#fff" stroke-width="2"/><rect x="1436.0" y="466.1" width="15" height="15" fill="none" stroke="#fff" stroke-width="2"/><rect x="1449.9" y="466.1" width="15" height="15" fill="none" stroke="#fff" stroke-width="2"/><rect x="1463.5" y="466.1" width="15" height="15" fill="none" stroke="#fff" stroke-width="2"/><rect x="1477.1" y="466.1" width="15" height="15" fill="none" stroke="#fff" stroke-width="2"/><rect x="1540.3" y="466.1" width="15" height="15" fill="none" stroke="#fff" stroke-width="2"/><rect x="1593.6" y="466.1" width="15" height="15" fill="none" stroke="#fff" stroke-width="2"/><rect x="1638.6" y="466.1" width="15" height="15" fill="none" stroke="#fff" stroke-width="2"/><rect x="1689.5" y="466.1" width="15" height="15" fill="none" stroke="#fff" stroke-width="2"/><rect x="1745.5" y="466.1" width="15" height="15" fill="none" stroke="#fff" stroke-width="2"/><rect x="1364.7" y="636.2" width="15" height="15" fill="none" stroke="#fff" stroke-width="2"/><rect x="1392.6" y="598.9" width="15" height="15" fill="none" stroke="#fff" stroke-width="2"/><rect x="1417.3" y="566.3" width="15" height="15" fill="none" stroke="#fff" stroke-width="2"/><rect x="1440.5" y="534.9" width="15" height="15" fill="none" stroke="#fff" stroke-width="2"/><rect x="1466.6" y="500.7" width="15" height="15" fill="none" stroke="#fff" stroke-width="2"/><rect x="1497.7" y="576.1" width="15" height="15" fill="none" stroke="#fff" stroke-width="2"/><rect x="1496.3" y="553.3" width="15" height="15" fill="none" stroke="#fff" stroke-width="2"/><rect x="1495.1" y="531.9" width="15" height="15" fill="none" stroke="#fff" stroke-width="2"/><rect x="1493.8" y="511.9" width="15" height="15" fill="none" stroke="#fff" stroke-width="2"/><rect x="1492.6" y="489.1" width="15" height="15" fill="none" stroke="#fff" stroke-width="2"/><rect x="1491.0" y="466.1" width="15" height="15" fill="none" stroke="#111" stroke-width="2"/><circle cx="1504.1" cy="294.3" r="5.3" fill="#10b010" stroke="#111" stroke-width="1.4"/><circle cx="1504.1" cy="328.5" r="5.3" fill="#50b050" stroke="#111" stroke-width="1.4"/><circle cx="1504.1" cy="366.6" r="5.3" fill="#70b070" stroke="#111" stroke-width="1.4"/><circle cx="1505.3" cy="399.6" r="5.3" fill="#88b488" stroke="#111" stroke-width="1.4"/><circle cx="1505.3" cy="432.4" r="5.3" fill="#a0b8a0" stroke="#111" stroke-width="1.4"/><circle cx="1588.4" cy="349.3" r="5.3" fill="#c8c800" stroke="#111" stroke-width="1.4"/><circle cx="1571.1" cy="375.1" r="5.3" fill="#c0c050" stroke="#111" stroke-width="1.4"/><circle cx="1554.4" cy="397.7" r="5.3" fill="#c0c070" stroke="#111" stroke-width="1.4"/><circle cx="1539.5" cy="420.6" r="5.3" fill="#c0c090" stroke="#111" stroke-width="1.4"/><circle cx="1523.2" cy="445.4" r="5.3" fill="#c0c0a4" stroke="#111" stroke-width="1.4"/><circle cx="1437" cy="469.5" r="5.3" fill="#20b0b0" stroke="#111" stroke-width="1.4"/><circle cx="1450.6" cy="469.5" r="5.3" fill="#50b0b0" stroke="#111" stroke-width="1.4"/><circle cx="1464.3" cy="469.5" r="5.3" fill="#70b4b4" stroke="#111" stroke-width="1.4"/><circle cx="1479.6" cy="466.4" r="5.3" fill="#90b8b8" stroke="#111" stroke-width="1.4"/><circle cx="1491.4" cy="466.4" r="5.3" fill="#a8bcbc" stroke="#111" stroke-width="1.4"/><circle cx="1549" cy="466.5" r="5.3" fill="#c08a8a" stroke="#111" stroke-width="1.4"/><circle cx="1597" cy="466.1" r="5.3" fill="#c06a6a" stroke="#111" stroke-width="1.4"/><circle cx="1646.1" cy="468" r="5.3" fill="#c05050" stroke="#111" stroke-width="1.4"/><circle cx="1705" cy="466.1" r="5.3" fill="#c03c3c" stroke="#111" stroke-width="1.4"/><circle cx="1751.7" cy="466.1" r="5.3" fill="#d00000" stroke="#111" stroke-width="1.4"/><circle cx="1372.6" cy="634.5" r="5.3" fill="#1010a8" stroke="#111" stroke-width="1.4"/><circle cx="1398.7" cy="603.5" r="5.3" fill="#4848b4" stroke="#111" stroke-width="1.4"/><circle cx="1427.2" cy="566.3" r="5.3" fill="#6868b8" stroke="#111" stroke-width="1.4"/><circle cx="1453.1" cy="533.7" r="5.3" fill="#8080bc" stroke="#111" stroke-width="1.4"/><circle cx="1478.1" cy="500.5" r="5.3" fill="#9a9ab4" stroke="#111" stroke-width="1.4"/><circle cx="1495.6" cy="580.5" r="5.3" fill="#c010b0" stroke="#111" stroke-width="1.4"/><circle cx="1498.5" cy="558.1" r="5.3" fill="#c060b8" stroke="#111" stroke-width="1.4"/><circle cx="1499.9" cy="532.3" r="5.3" fill="#c080b8" stroke="#111" stroke-width="1.4"/><circle cx="1501.1" cy="511.9" r="5.3" fill="#c090b8" stroke="#111" stroke-width="1.4"/><circle cx="1504.2" cy="489.3" r="5.3" fill="#c0a4b8" stroke="#111" stroke-width="1.4"/><circle cx="1505.2" cy="466.5" r="5.3" fill="#ffffff" stroke="#111" stroke-width="1.4"/><rect x="1808.6" y="241.3" width="15" height="15" fill="none" stroke="#fff" stroke-width="2"/><circle cx="1848.8" cy="173.1" r="5.3" fill="#c8c800" stroke="#111" stroke-width="1.4"/><circle cx="1764" cy="328.7" r="5.3" fill="#c0c060" stroke="#111" stroke-width="1.4"/></svg><script>(function(){
var L=[[.1741,.005],[.1738,.0049],[.1733,.0048],[.1726,.0048],[.1714,.0051],[.1689,.0069],[.1644,.0109],[.1566,.0177],[.144,.0297],[.1241,.0578],[.1096,.0868],[.0913,.1327],[.0687,.2007],[.0454,.295],[.0235,.4127],[.0082,.5384],[.0039,.6548],[.0139,.7502],[.0389,.812],[.0743,.8338],[.1142,.8262],[.1547,.8059],[.1929,.7816],[.2296,.7543],[.2658,.7243],[.3016,.6923],[.3373,.6589],[.3731,.6245],[.4087,.5896],[.4441,.5547],[.4788,.5202],[.5125,.4866],[.5448,.4544],[.5752,.4242],[.6029,.3965],[.627,.3725],[.6482,.3514],[.6658,.334],[.6801,.3197],[.6915,.3083],[.7006,.2993],[.7079,.292],[.714,.2859],[.719,.2809],[.723,.277],[.726,.274],[.7283,.2717],[.73,.27],[.7311,.2689],[.732,.268],[.7327,.2673],[.7334,.2666],[.734,.266],[.7344,.2656],[.7346,.2654],[.7347,.2653]];
function g(c){return c;}
var TV=[[.64,.33],[.30,.60],[.15,.06]];
function tdist(x,y){var m=0;for(var i=0;i<3;i++){var a=TV[i],b=TV[(i+1)%3],ex=b[0]-a[0],ey=b[1]-a[1],l=Math.sqrt(ex*ex+ey*ey);var s=((x-a[0])*ey-(y-a[1])*ex)/l; if(s>m)m=s;}return m;}
function col(x,y,dim){
  if(y<0.002)y=0.002;
  var X=x/y,Z=(1-x-y)/y;
  var r=3.2406*X-1.5372-0.4986*Z, gg=-0.9689*X+1.8758+0.0415*Z, b=0.0557*X-0.204+1.057*Z;
  if(r<0)r=0; if(gg<0)gg=0; if(b<0)b=0;
  var m=Math.max(r,gg,b)||1; r/=m; gg/=m; b/=m;
  r=g(r); gg=g(gg); b=g(b);
  var k=1;
  if(dim){var d=tdist(x,y); var rr=r*(1-gg)*(1-b); k=0.63-0.2*rr-0.75*d; if(k<0.3)k=0.3;}
  return [r*255*k,gg*255*k,b*255*k];
}
function layer(w,h,fx,fy,dim){
  var c=document.createElement('canvas');c.width=w;c.height=h;
  var cx=c.getContext('2d'),im=cx.createImageData(w,h),d=im.data;
  for(var j=0;j<h;j++)for(var i=0;i<w;i++){
    var p=col(fx(i+0.5),fy(j+0.5),dim),o=(j*w+i)*4;
    d[o]=p[0];d[o+1]=p[1];d[o+2]=p[2];d[o+3]=255;
  }
  cx.putImageData(im,0,0);return c;
}
function draw(id,w,h,sx,x0,sy,y0,locus){
  var cv=document.getElementById(id); if(!cv)return;
  var ctx=cv.getContext('2d');
  var fx=function(i){return x0+i/sx;}, fy=function(j){return y0-j/sy;};
  var px=function(x){return (x-x0)*sx;}, py=function(y){return (y0-y)*sy;};
  var dimc=layer(w,h,fx,fy,true), brc=layer(w,h,fx,fy,false);
  ctx.save();ctx.beginPath();
  if(locus){var n=L.length;ctx.moveTo(px(L[0][0]),py(L[0][1]));for(var i=0;i<n-1;i++){var p0=L[Math.max(i-1,0)],p1=L[i],p2=L[i+1],p3=L[Math.min(i+2,n-1)];for(var t=1;t<=8;t++){var u=t/8,u2=u*u,u3=u2*u;var fxv=0.5*((2*p1[0])+(-p0[0]+p2[0])*u+(2*p0[0]-5*p1[0]+4*p2[0]-p3[0])*u2+(-p0[0]+3*p1[0]-3*p2[0]+p3[0])*u3);var fyv=0.5*((2*p1[1])+(-p0[1]+p2[1])*u+(2*p0[1]-5*p1[1]+4*p2[1]-p3[1])*u2+(-p0[1]+3*p1[1]-3*p2[1]+p3[1])*u3);ctx.lineTo(px(fxv),py(fyv));}}ctx.closePath();}
  else ctx.rect(0,0,w,h);
  ctx.clip();ctx.drawImage(dimc,0,0);ctx.restore();
  ctx.save();ctx.beginPath();ctx.moveTo(px(.64),py(.33));ctx.lineTo(px(.30),py(.60));ctx.lineTo(px(.15),py(.06));ctx.closePath();ctx.clip();ctx.drawImage(brc,0,0);ctx.restore();
}
draw('cie',652,531,775,0,631,530.4/631,true);
draw('ins',186,193,3700,0.3943,3830,0.5305,false);
})();
</script></body></html>
